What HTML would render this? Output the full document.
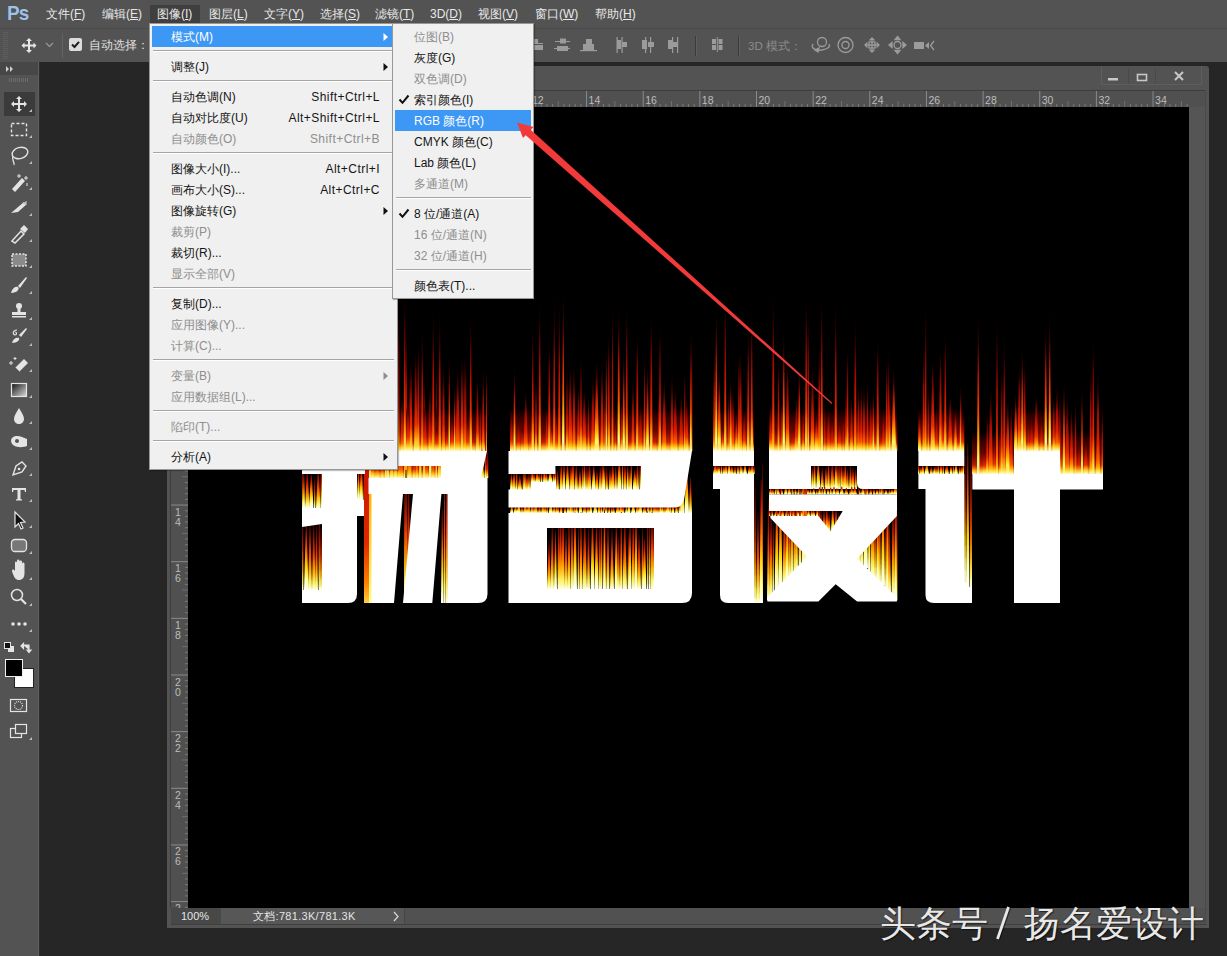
<!DOCTYPE html>
<html><head><meta charset="utf-8">
<style>
*{margin:0;padding:0;box-sizing:border-box}
html,body{width:1227px;height:956px;overflow:hidden;background:#262626;font-family:"Liberation Sans",sans-serif;position:relative}
div,span,svg{position:absolute}
.mb{top:5px;height:18px;line-height:18px;font-size:12px;color:#e8e8e8;white-space:nowrap}
.menu{background:#f0f0f0;border:1px solid #979797;}
.it{height:21px;line-height:23px;font-size:12px;color:#151515;white-space:nowrap}
.dis{color:#8e8e8e}
.sep{height:2px;border-top:1px solid #a5a5a5;border-bottom:1px solid #fff}
.sc{text-align:right;height:21px;line-height:23px;font-size:12px;white-space:nowrap;letter-spacing:.45px}
.hl{background:#3d97f5}
.rn{font-size:10px;color:#bdbdbd;line-height:10px}
</style></head><body>

<div style="left:0;top:0;width:1227px;height:28px;background:#535353"></div>
<div style="left:7px;top:1px;height:24px;line-height:24px;font-size:20.5px;font-weight:bold;color:#a2c0e0;letter-spacing:-0.8px;transform:scaleX(.92);transform-origin:0 0;text-shadow:0 0 1px #2a4f7a">Ps</div>
<div style="left:150px;top:5px;width:50px;height:18px;background:#3f3f3f"></div>
<div class="mb" style="left:46px">文件(<u>F</u>)</div>
<div class="mb" style="left:102px">编辑(<u>E</u>)</div>
<div class="mb" style="left:157px">图像(<u>I</u>)</div>
<div class="mb" style="left:209px">图层(<u>L</u>)</div>
<div class="mb" style="left:264px">文字(<u>Y</u>)</div>
<div class="mb" style="left:320px">选择(<u>S</u>)</div>
<div class="mb" style="left:375px">滤镜(<u>T</u>)</div>
<div class="mb" style="left:430px">3D(<u>D</u>)</div>
<div class="mb" style="left:478px">视图(<u>V</u>)</div>
<div class="mb" style="left:535px">窗口(<u>W</u>)</div>
<div class="mb" style="left:595px">帮助(<u>H</u>)</div>
<div style="left:0;top:28px;width:1227px;height:34px;background:#535353;border-top:1px solid #4a4a4a"></div>
<div style="left:3px;top:32px;width:5px;height:27px;background:repeating-linear-gradient(#5d5d5d 0 1px,transparent 1px 2px)"></div>
<svg style="left:20px;top:37px" width="18" height="17" viewBox="0 0 18 17"><path d="M9 1 L12 4 H10 V7.5 H13.5 V5.5 L16.5 8.5 L13.5 11.5 V9.5 H10 V13 H12 L9 16 L6 13 H8 V9.5 H4.5 V11.5 L1.5 8.5 L4.5 5.5 V7.5 H8 V4 H6 Z" fill="#e6e6e6"/></svg>
<svg style="left:45px;top:42px" width="9" height="6"><path d="M1 1 L4.5 4.5 L8 1" stroke="#9a9a9a" fill="none" stroke-width="1.2"/></svg>
<div style="left:62px;top:33px;width:1px;height:25px;background:#3e3e3e;border-right:1px solid #646464"></div>
<div style="left:69px;top:38px;width:13px;height:13px;background:#dcdcdc;border-radius:2px"></div>
<svg style="left:69px;top:38px" width="13" height="13"><path d="M3 6.5 L5.5 9 L10 3.8" stroke="#1e1e1e" stroke-width="2" fill="none"/></svg>
<div style="left:89px;top:36px;height:18px;line-height:18px;font-size:12px;color:#e0e0e0;white-space:nowrap">自动选择：</div>
<svg style="left:528px;top:36px" width="410" height="20" viewBox="528 36 410 20">
<g fill="#9b9b9b">
<rect x="531" y="39" width="7" height="4"/><rect x="531" y="45" width="12" height="5"/><rect x="530" y="43" width="13" height="1"/>
<rect x="560" y="38.5" width="6" height="5"/><rect x="555" y="41" width="15" height="1"/><rect x="557" y="46" width="11" height="5"/><rect x="554" y="48" width="16" height="1"/>
<rect x="586" y="39" width="6" height="5"/><rect x="583" y="44" width="11" height="6"/><rect x="580" y="50" width="17" height="1.2"/>
<rect x="616.5" y="37" width="1.2" height="16"/><rect x="617" y="40" width="4" height="9"/><rect x="621.5" y="37" width="1.2" height="16"/><rect x="622" y="42" width="5" height="5"/>
<rect x="642" y="40" width="5" height="9"/><rect x="645" y="37" width="1.2" height="16"/><rect x="648" y="42" width="6" height="5"/><rect x="650" y="37" width="1.2" height="16"/>
<rect x="668" y="40" width="4" height="9"/><rect x="672" y="37" width="1.2" height="16"/><rect x="673" y="42" width="4" height="5"/><rect x="677" y="37" width="1.2" height="16"/>
<rect x="712" y="39" width="4" height="5"/><rect x="712" y="45" width="4" height="5"/><rect x="718.5" y="39" width="4" height="5"/><rect x="718.5" y="45" width="4" height="5"/><rect x="716.8" y="37" width="1" height="15"/>
</g>
<rect x="695" y="36" width="1" height="20" fill="#3c3c3c"/><rect x="696" y="36" width="1" height="20" fill="#5f5f5f"/>
<rect x="738" y="36" width="1" height="20" fill="#3c3c3c"/><rect x="739" y="36" width="1" height="20" fill="#5f5f5f"/>
</svg>
<div style="left:748px;top:37px;height:18px;line-height:18px;font-size:11.5px;color:#8c8c8c;white-space:nowrap">3D 模式：</div>
<svg style="left:805px;top:35px" width="135" height="22" viewBox="805 35 135 22" fill="none" stroke="#9b9b9b" stroke-width="1.3">
<circle cx="822" cy="42" r="4.5"/><path d="M813 44 C810 48 816 51 822 50 C827 49 831 47 829 44"/><path d="M815 50 L819 48 L818 52 Z" fill="#9b9b9b"/>
<circle cx="845.5" cy="45" r="7.5"/><circle cx="845.5" cy="45" r="3.5"/>
<path d="M872 38 V52 M865 45 H879 M869.5 40.5 L872 38 L874.5 40.5 M869.5 49.5 L872 52 L874.5 49.5 M867.5 42.5 L865 45 L867.5 47.5 M876.5 42.5 L879 45 L876.5 47.5"/><rect x="869" y="42" width="6" height="6"/>
<circle cx="897.5" cy="45" r="3.5"/><path d="M897.5 36.5 L900 39.5 H895 Z M897.5 53.5 L900 50.5 H895 Z M889 45 L892 42.5 V47.5 Z M906 45 L903 42.5 V47.5 Z" fill="#9b9b9b"/>
<rect x="914" y="42" width="10" height="7" fill="#9b9b9b" stroke="none"/><path d="M925 45.5 L929 42 V49 Z" fill="#9b9b9b" stroke="none"/><path d="M934 41 L930.5 45.5 L934 50"/>
</svg>
<div style="left:0;top:62px;width:40px;height:894px;background:#535353"></div>
<div style="left:38px;top:62px;width:1px;height:894px;background:#5e5e5e"></div>
<div style="left:39px;top:62px;width:1px;height:894px;background:#2e2e2e"></div>
<div style="left:0;top:62px;width:38px;height:13px;background:#474747"></div>
<svg style="left:5px;top:65px" width="10" height="8"><path d="M1 1 L4 4 L1 7 Z M5 1 L8 4 L5 7 Z" fill="#d0d0d0"/></svg>
<div style="left:9px;top:78px;width:20px;height:4px;background:repeating-linear-gradient(90deg,#6a6a6a 0 1px,transparent 1px 2px)"></div>
<div style="left:4px;top:92px;width:31px;height:24px;background:#3b3b3b"></div>
<svg style="left:0;top:0" width="40" height="760"><defs><linearGradient id="tg2" x1="0" y1="0" x2="1" y2="1"><stop offset="0" stop-color="#111"/><stop offset="1" stop-color="#ddd"/></linearGradient></defs><path d="M19 96 L22 99 H20 V103 H24 V101 L27 104 L24 107 V105 H20 V109 H22 L19 112 L16 109 H18 V105 H14 V107 L11 104 L14 101 V103 H18 V99 H16 Z" fill="#e4e4e4"/><rect x="11.5" y="123.5" width="15" height="12" fill="none" stroke="#e4e4e4" stroke-width="1.4" stroke-dasharray="3 2"/><ellipse cx="20" cy="153" rx="8" ry="5.5" fill="none" stroke="#e4e4e4" stroke-width="1.4" transform="rotate(-15 20 153)"/><path d="M13 156 C11 160 15 162 14 165" fill="none" stroke="#e4e4e4" stroke-width="1.3"/><path d="M12 189 L22 178 L25 181 L15 192 Z" fill="#e4e4e4"/><path d="M19 174 V178 M17 176 H21 M26 176 V180 M24 178 H28 M27 183 V186" stroke="#e4e4e4" stroke-width="1"/><path d="M11 213 L24 202 L27 204 L18 212 Z" fill="#e4e4e4"/><path d="M22 203 L27 201 L26 205 Z" fill="#bdbdbd"/><path d="M12 241 L21 231 L24 234 L15 243 Z" fill="none" stroke="#e4e4e4" stroke-width="1.5"/><path d="M20 229 L24 225 L28 229 L25 233 Z" fill="#e4e4e4"/><rect x="12" y="254" width="14" height="12" fill="#8a8a8a" stroke="#e4e4e4" stroke-width="1.5" stroke-dasharray="2 1.5"/><path d="M18 286 L26 277 L27 278 L20 288 Z" fill="#e4e4e4"/><path d="M11 293 C12 289 15 286 18 287 C20 289 17 293 11 293 Z" fill="#e4e4e4"/><circle cx="19" cy="306" r="3" fill="#e4e4e4"/><rect x="17.5" y="308" width="3" height="4" fill="#e4e4e4"/><rect x="12" y="312" width="14" height="3" fill="#e4e4e4"/><rect x="12" y="316" width="14" height="1.5" fill="#e4e4e4"/><path d="M19 335 L26 328 L27 329 L21 337 Z" fill="#e4e4e4"/><path d="M12 343 C13 339 16 337 19 338 C20 340 17 343 12 343 Z" fill="#e4e4e4"/><path d="M17 330 C13 330 12 334 15 335 C17 335 17 332 15 332" fill="none" stroke="#e4e4e4" stroke-width="1.2"/><path d="M15 368 L24 359 L28 363 L19 372 Z" fill="#e4e4e4"/><path d="M15 368 L19 372" stroke="#535353" stroke-width="1.5"/><path d="M11 361 V365 M9 363 H13 M15 357 V360 M13.5 358.5 H16.5" stroke="#e4e4e4" stroke-width="1"/><rect x="11.5" y="383.5" width="15" height="13" fill="url(#tg2)" stroke="#e4e4e4" stroke-width="1.2"/><path d="M19 408 C16 413 14 416 14 419 C14 422 16.5 424 19 424 C21.5 424 24 422 24 419 C24 416 22 413 19 408 Z" fill="#e4e4e4"/><path d="M11 441 C11 436 17 435 22 437 L27 439 L27 446 C22 448 12 448 11 441 Z" fill="#e4e4e4"/><circle cx="17" cy="441" r="2" fill="#535353"/><path d="M13 475 L16 466 L22 462 L26 466 L22 472 Z" fill="none" stroke="#e4e4e4" stroke-width="1.4"/><circle cx="19" cy="469" r="1.3" fill="#e4e4e4"/><path d="M12 488 H26 V492 H25 L24.5 490 H20.5 V499 L22 499.5 V500.5 H16 V499.5 L17.5 499 V490 H13.5 L13 492 H12 Z" fill="#e4e4e4"/><path d="M15 512 L15 527 L18.5 523.5 L21 529 L23 528 L20.5 522.5 L25 522 Z" fill="#111" stroke="#e4e4e4" stroke-width="1.2"/><rect x="11.5" y="539.5" width="15" height="12" rx="3.5" fill="#777" stroke="#e4e4e4" stroke-width="1.3"/><path d="M12 571 C12 569 14 569 15 571 L15 563 C15 561 17 561 17 563 L17 568 L17 561 C17 559 19.5 559 19.5 561 L19.5 568 L19.5 562 C19.5 560 22 560 22 562 L22 568 L22 564 C22 562 24.5 562 24.5 564 L24.5 573 C24.5 578 22 580 19 580 C16 580 14 578 12 571 Z" fill="#e4e4e4"/><circle cx="17" cy="595" r="5.5" fill="none" stroke="#e4e4e4" stroke-width="1.5"/><path d="M21 599 L26 604" stroke="#e4e4e4" stroke-width="2.2"/><circle cx="13" cy="624" r="1.8" fill="#e4e4e4"/><circle cx="19" cy="624" r="1.8" fill="#e4e4e4"/><circle cx="25" cy="624" r="1.8" fill="#e4e4e4"/><rect x="8" y="646" width="6" height="6" fill="#e4e4e4"/><rect x="4.5" y="642.5" width="6" height="6" fill="#111" stroke="#e4e4e4" stroke-width="1"/><path d="M23 645 H29 V650 M21 646 L23.5 643.5 V648.5 Z M27 650 H31 L29 652.5 Z" stroke="#e4e4e4" stroke-width="1.2" fill="#e4e4e4"/><rect x="14.5" y="668.5" width="19" height="19" fill="#fff" stroke="#222" stroke-width="1"/><rect x="5.5" y="659.5" width="17" height="17" fill="#000" stroke="#f0f0f0" stroke-width="1"/><rect x="10.5" y="699.5" width="16" height="12" fill="none" stroke="#e4e4e4" stroke-width="1.2"/><circle cx="18.5" cy="705.5" r="4" fill="none" stroke="#e4e4e4" stroke-width="1.2" stroke-dasharray="1 1"/><rect x="10.5" y="728.5" width="11" height="9" fill="#535353" stroke="#e4e4e4" stroke-width="1.2"/><rect x="15.5" y="724.5" width="11" height="9" fill="#535353" stroke="#e4e4e4" stroke-width="1.2"/><path d="M32 112 L32 109 L29 112 Z" fill="#bdbdbd"/><path d="M32 138 L32 135 L29 138 Z" fill="#bdbdbd"/><path d="M32 164 L32 161 L29 164 Z" fill="#bdbdbd"/><path d="M32 190 L32 187 L29 190 Z" fill="#bdbdbd"/><path d="M32 216 L32 213 L29 216 Z" fill="#bdbdbd"/><path d="M32 242 L32 239 L29 242 Z" fill="#bdbdbd"/><path d="M32 268 L32 265 L29 268 Z" fill="#bdbdbd"/><path d="M32 294 L32 291 L29 294 Z" fill="#bdbdbd"/><path d="M32 320 L32 317 L29 320 Z" fill="#bdbdbd"/><path d="M32 346 L32 343 L29 346 Z" fill="#bdbdbd"/><path d="M32 372 L32 369 L29 372 Z" fill="#bdbdbd"/><path d="M32 398 L32 395 L29 398 Z" fill="#bdbdbd"/><path d="M32 424 L32 421 L29 424 Z" fill="#bdbdbd"/><path d="M32 450 L32 447 L29 450 Z" fill="#bdbdbd"/><path d="M32 476 L32 473 L29 476 Z" fill="#bdbdbd"/><path d="M32 502 L32 499 L29 502 Z" fill="#bdbdbd"/><path d="M32 528 L32 525 L29 528 Z" fill="#bdbdbd"/><path d="M32 554 L32 551 L29 554 Z" fill="#bdbdbd"/><path d="M32 580 L32 577 L29 580 Z" fill="#bdbdbd"/><path d="M32 606 L32 603 L29 606 Z" fill="#bdbdbd"/><path d="M32 632 L32 629 L29 632 Z" fill="#bdbdbd"/><path d="M32 740 L32 737 L29 740 Z" fill="#bdbdbd"/></svg>
<div style="left:167px;top:66px;width:1042px;height:862px;background:#535353;border-radius:3px 3px 0 0"></div>
<svg style="left:1095px;top:66px" width="114" height="24" viewBox="1095 66 114 24">
<path d="M1101.5 66 V84.5 H1201.5 V66" fill="none" stroke="#5e5e5e" stroke-width="1"/>
<path d="M1128.5 68 V84 M1155.5 68 V84" stroke="#4a4a4a" stroke-width="1"/>
<rect x="1108" y="78" width="10" height="2.5" fill="#c8c8c8"/>
<rect x="1137.5" y="74.5" width="9" height="6" fill="none" stroke="#c8c8c8" stroke-width="1.6"/>
<path d="M1175 72 L1183 80 M1183 72 L1175 80" stroke="#c8c8c8" stroke-width="2"/>
</svg>
<div style="left:171px;top:90px;width:1035px;height:1px;background:#3e3e3e"></div>
<div style="left:171px;top:91px;width:1035px;height:16px;background:#505050"></div>
<div style="left:171px;top:107px;width:17px;height:801px;background:#505050"></div>
<div style="left:170px;top:90px;width:1px;height:818px;background:#3e3e3e"></div>
<div style="left:188px;top:107px;width:1001px;height:801px;background:#000"></div>
<div style="left:1189px;top:107px;width:17px;height:801px;background:#555"></div>
<div style="left:1205px;top:90px;width:1px;height:835px;background:#4a4a4a"></div>
<svg style="left:0;top:0" width="1227" height="956" viewBox="0 0 1227 956"><rect x="189.50" y="91" width="1" height="16" fill="#8a8a8a"/><rect x="195.16" y="104" width="1" height="3" fill="#7a7a7a"/><rect x="200.83" y="104" width="1" height="3" fill="#7a7a7a"/><rect x="206.50" y="104" width="1" height="3" fill="#7a7a7a"/><rect x="212.16" y="104" width="1" height="3" fill="#7a7a7a"/><rect x="217.82" y="101" width="1" height="6" fill="#707070"/><rect x="223.49" y="104" width="1" height="3" fill="#7a7a7a"/><rect x="229.16" y="104" width="1" height="3" fill="#7a7a7a"/><rect x="234.82" y="104" width="1" height="3" fill="#7a7a7a"/><rect x="240.49" y="104" width="1" height="3" fill="#7a7a7a"/><rect x="246.15" y="91" width="1" height="16" fill="#8a8a8a"/><text x="248.65" y="103.5" font-size="10.5" fill="#bcbcbc" font-family="Liberation Sans">2</text><rect x="251.81" y="104" width="1" height="3" fill="#7a7a7a"/><rect x="257.48" y="104" width="1" height="3" fill="#7a7a7a"/><rect x="263.14" y="104" width="1" height="3" fill="#7a7a7a"/><rect x="268.81" y="104" width="1" height="3" fill="#7a7a7a"/><rect x="274.48" y="101" width="1" height="6" fill="#707070"/><rect x="280.14" y="104" width="1" height="3" fill="#7a7a7a"/><rect x="285.81" y="104" width="1" height="3" fill="#7a7a7a"/><rect x="291.47" y="104" width="1" height="3" fill="#7a7a7a"/><rect x="297.13" y="104" width="1" height="3" fill="#7a7a7a"/><rect x="302.80" y="91" width="1" height="16" fill="#8a8a8a"/><text x="305.30" y="103.5" font-size="10.5" fill="#bcbcbc" font-family="Liberation Sans">4</text><rect x="308.47" y="104" width="1" height="3" fill="#7a7a7a"/><rect x="314.13" y="104" width="1" height="3" fill="#7a7a7a"/><rect x="319.79" y="104" width="1" height="3" fill="#7a7a7a"/><rect x="325.46" y="104" width="1" height="3" fill="#7a7a7a"/><rect x="331.12" y="101" width="1" height="6" fill="#707070"/><rect x="336.79" y="104" width="1" height="3" fill="#7a7a7a"/><rect x="342.46" y="104" width="1" height="3" fill="#7a7a7a"/><rect x="348.12" y="104" width="1" height="3" fill="#7a7a7a"/><rect x="353.78" y="104" width="1" height="3" fill="#7a7a7a"/><rect x="359.45" y="91" width="1" height="16" fill="#8a8a8a"/><text x="361.95" y="103.5" font-size="10.5" fill="#bcbcbc" font-family="Liberation Sans">6</text><rect x="365.12" y="104" width="1" height="3" fill="#7a7a7a"/><rect x="370.78" y="104" width="1" height="3" fill="#7a7a7a"/><rect x="376.44" y="104" width="1" height="3" fill="#7a7a7a"/><rect x="382.11" y="104" width="1" height="3" fill="#7a7a7a"/><rect x="387.77" y="101" width="1" height="6" fill="#707070"/><rect x="393.44" y="104" width="1" height="3" fill="#7a7a7a"/><rect x="399.11" y="104" width="1" height="3" fill="#7a7a7a"/><rect x="404.77" y="104" width="1" height="3" fill="#7a7a7a"/><rect x="410.44" y="104" width="1" height="3" fill="#7a7a7a"/><rect x="416.10" y="91" width="1" height="16" fill="#8a8a8a"/><text x="418.60" y="103.5" font-size="10.5" fill="#bcbcbc" font-family="Liberation Sans">8</text><rect x="421.76" y="104" width="1" height="3" fill="#7a7a7a"/><rect x="427.43" y="104" width="1" height="3" fill="#7a7a7a"/><rect x="433.10" y="104" width="1" height="3" fill="#7a7a7a"/><rect x="438.76" y="104" width="1" height="3" fill="#7a7a7a"/><rect x="444.43" y="101" width="1" height="6" fill="#707070"/><rect x="450.09" y="104" width="1" height="3" fill="#7a7a7a"/><rect x="455.75" y="104" width="1" height="3" fill="#7a7a7a"/><rect x="461.42" y="104" width="1" height="3" fill="#7a7a7a"/><rect x="467.08" y="104" width="1" height="3" fill="#7a7a7a"/><rect x="472.75" y="91" width="1" height="16" fill="#8a8a8a"/><text x="475.25" y="103.5" font-size="10.5" fill="#bcbcbc" font-family="Liberation Sans">10</text><rect x="478.42" y="104" width="1" height="3" fill="#7a7a7a"/><rect x="484.08" y="104" width="1" height="3" fill="#7a7a7a"/><rect x="489.75" y="104" width="1" height="3" fill="#7a7a7a"/><rect x="495.41" y="104" width="1" height="3" fill="#7a7a7a"/><rect x="501.07" y="101" width="1" height="6" fill="#707070"/><rect x="506.74" y="104" width="1" height="3" fill="#7a7a7a"/><rect x="512.40" y="104" width="1" height="3" fill="#7a7a7a"/><rect x="518.07" y="104" width="1" height="3" fill="#7a7a7a"/><rect x="523.74" y="104" width="1" height="3" fill="#7a7a7a"/><rect x="529.40" y="91" width="1" height="16" fill="#8a8a8a"/><text x="531.90" y="103.5" font-size="10.5" fill="#bcbcbc" font-family="Liberation Sans">12</text><rect x="535.07" y="104" width="1" height="3" fill="#7a7a7a"/><rect x="540.73" y="104" width="1" height="3" fill="#7a7a7a"/><rect x="546.39" y="104" width="1" height="3" fill="#7a7a7a"/><rect x="552.06" y="104" width="1" height="3" fill="#7a7a7a"/><rect x="557.73" y="101" width="1" height="6" fill="#707070"/><rect x="563.39" y="104" width="1" height="3" fill="#7a7a7a"/><rect x="569.06" y="104" width="1" height="3" fill="#7a7a7a"/><rect x="574.72" y="104" width="1" height="3" fill="#7a7a7a"/><rect x="580.38" y="104" width="1" height="3" fill="#7a7a7a"/><rect x="586.05" y="91" width="1" height="16" fill="#8a8a8a"/><text x="588.55" y="103.5" font-size="10.5" fill="#bcbcbc" font-family="Liberation Sans">14</text><rect x="591.71" y="104" width="1" height="3" fill="#7a7a7a"/><rect x="597.38" y="104" width="1" height="3" fill="#7a7a7a"/><rect x="603.05" y="104" width="1" height="3" fill="#7a7a7a"/><rect x="608.71" y="104" width="1" height="3" fill="#7a7a7a"/><rect x="614.38" y="101" width="1" height="6" fill="#707070"/><rect x="620.04" y="104" width="1" height="3" fill="#7a7a7a"/><rect x="625.70" y="104" width="1" height="3" fill="#7a7a7a"/><rect x="631.37" y="104" width="1" height="3" fill="#7a7a7a"/><rect x="637.04" y="104" width="1" height="3" fill="#7a7a7a"/><rect x="642.70" y="91" width="1" height="16" fill="#8a8a8a"/><text x="645.20" y="103.5" font-size="10.5" fill="#bcbcbc" font-family="Liberation Sans">16</text><rect x="648.37" y="104" width="1" height="3" fill="#7a7a7a"/><rect x="654.03" y="104" width="1" height="3" fill="#7a7a7a"/><rect x="659.69" y="104" width="1" height="3" fill="#7a7a7a"/><rect x="665.36" y="104" width="1" height="3" fill="#7a7a7a"/><rect x="671.02" y="101" width="1" height="6" fill="#707070"/><rect x="676.69" y="104" width="1" height="3" fill="#7a7a7a"/><rect x="682.36" y="104" width="1" height="3" fill="#7a7a7a"/><rect x="688.02" y="104" width="1" height="3" fill="#7a7a7a"/><rect x="693.68" y="104" width="1" height="3" fill="#7a7a7a"/><rect x="699.35" y="91" width="1" height="16" fill="#8a8a8a"/><text x="701.85" y="103.5" font-size="10.5" fill="#bcbcbc" font-family="Liberation Sans">18</text><rect x="705.01" y="104" width="1" height="3" fill="#7a7a7a"/><rect x="710.68" y="104" width="1" height="3" fill="#7a7a7a"/><rect x="716.35" y="104" width="1" height="3" fill="#7a7a7a"/><rect x="722.01" y="104" width="1" height="3" fill="#7a7a7a"/><rect x="727.67" y="101" width="1" height="6" fill="#707070"/><rect x="733.34" y="104" width="1" height="3" fill="#7a7a7a"/><rect x="739.00" y="104" width="1" height="3" fill="#7a7a7a"/><rect x="744.67" y="104" width="1" height="3" fill="#7a7a7a"/><rect x="750.34" y="104" width="1" height="3" fill="#7a7a7a"/><rect x="756.00" y="91" width="1" height="16" fill="#8a8a8a"/><text x="758.50" y="103.5" font-size="10.5" fill="#bcbcbc" font-family="Liberation Sans">20</text><rect x="761.66" y="104" width="1" height="3" fill="#7a7a7a"/><rect x="767.33" y="104" width="1" height="3" fill="#7a7a7a"/><rect x="773.00" y="104" width="1" height="3" fill="#7a7a7a"/><rect x="778.66" y="104" width="1" height="3" fill="#7a7a7a"/><rect x="784.33" y="101" width="1" height="6" fill="#707070"/><rect x="789.99" y="104" width="1" height="3" fill="#7a7a7a"/><rect x="795.65" y="104" width="1" height="3" fill="#7a7a7a"/><rect x="801.32" y="104" width="1" height="3" fill="#7a7a7a"/><rect x="806.99" y="104" width="1" height="3" fill="#7a7a7a"/><rect x="812.65" y="91" width="1" height="16" fill="#8a8a8a"/><text x="815.15" y="103.5" font-size="10.5" fill="#bcbcbc" font-family="Liberation Sans">22</text><rect x="818.32" y="104" width="1" height="3" fill="#7a7a7a"/><rect x="823.98" y="104" width="1" height="3" fill="#7a7a7a"/><rect x="829.64" y="104" width="1" height="3" fill="#7a7a7a"/><rect x="835.31" y="104" width="1" height="3" fill="#7a7a7a"/><rect x="840.98" y="101" width="1" height="6" fill="#707070"/><rect x="846.64" y="104" width="1" height="3" fill="#7a7a7a"/><rect x="852.30" y="104" width="1" height="3" fill="#7a7a7a"/><rect x="857.97" y="104" width="1" height="3" fill="#7a7a7a"/><rect x="863.63" y="104" width="1" height="3" fill="#7a7a7a"/><rect x="869.30" y="91" width="1" height="16" fill="#8a8a8a"/><text x="871.80" y="103.5" font-size="10.5" fill="#bcbcbc" font-family="Liberation Sans">24</text><rect x="874.97" y="104" width="1" height="3" fill="#7a7a7a"/><rect x="880.63" y="104" width="1" height="3" fill="#7a7a7a"/><rect x="886.29" y="104" width="1" height="3" fill="#7a7a7a"/><rect x="891.96" y="104" width="1" height="3" fill="#7a7a7a"/><rect x="897.62" y="101" width="1" height="6" fill="#707070"/><rect x="903.29" y="104" width="1" height="3" fill="#7a7a7a"/><rect x="908.96" y="104" width="1" height="3" fill="#7a7a7a"/><rect x="914.62" y="104" width="1" height="3" fill="#7a7a7a"/><rect x="920.28" y="104" width="1" height="3" fill="#7a7a7a"/><rect x="925.95" y="91" width="1" height="16" fill="#8a8a8a"/><text x="928.45" y="103.5" font-size="10.5" fill="#bcbcbc" font-family="Liberation Sans">26</text><rect x="931.62" y="104" width="1" height="3" fill="#7a7a7a"/><rect x="937.28" y="104" width="1" height="3" fill="#7a7a7a"/><rect x="942.95" y="104" width="1" height="3" fill="#7a7a7a"/><rect x="948.61" y="104" width="1" height="3" fill="#7a7a7a"/><rect x="954.27" y="101" width="1" height="6" fill="#707070"/><rect x="959.94" y="104" width="1" height="3" fill="#7a7a7a"/><rect x="965.61" y="104" width="1" height="3" fill="#7a7a7a"/><rect x="971.27" y="104" width="1" height="3" fill="#7a7a7a"/><rect x="976.94" y="104" width="1" height="3" fill="#7a7a7a"/><rect x="982.60" y="91" width="1" height="16" fill="#8a8a8a"/><text x="985.10" y="103.5" font-size="10.5" fill="#bcbcbc" font-family="Liberation Sans">28</text><rect x="988.26" y="104" width="1" height="3" fill="#7a7a7a"/><rect x="993.93" y="104" width="1" height="3" fill="#7a7a7a"/><rect x="999.60" y="104" width="1" height="3" fill="#7a7a7a"/><rect x="1005.26" y="104" width="1" height="3" fill="#7a7a7a"/><rect x="1010.92" y="101" width="1" height="6" fill="#707070"/><rect x="1016.59" y="104" width="1" height="3" fill="#7a7a7a"/><rect x="1022.25" y="104" width="1" height="3" fill="#7a7a7a"/><rect x="1027.92" y="104" width="1" height="3" fill="#7a7a7a"/><rect x="1033.59" y="104" width="1" height="3" fill="#7a7a7a"/><rect x="1039.25" y="91" width="1" height="16" fill="#8a8a8a"/><text x="1041.75" y="103.5" font-size="10.5" fill="#bcbcbc" font-family="Liberation Sans">30</text><rect x="1044.91" y="104" width="1" height="3" fill="#7a7a7a"/><rect x="1050.58" y="104" width="1" height="3" fill="#7a7a7a"/><rect x="1056.24" y="104" width="1" height="3" fill="#7a7a7a"/><rect x="1061.91" y="104" width="1" height="3" fill="#7a7a7a"/><rect x="1067.58" y="101" width="1" height="6" fill="#707070"/><rect x="1073.24" y="104" width="1" height="3" fill="#7a7a7a"/><rect x="1078.90" y="104" width="1" height="3" fill="#7a7a7a"/><rect x="1084.57" y="104" width="1" height="3" fill="#7a7a7a"/><rect x="1090.24" y="104" width="1" height="3" fill="#7a7a7a"/><rect x="1095.90" y="91" width="1" height="16" fill="#8a8a8a"/><text x="1098.40" y="103.5" font-size="10.5" fill="#bcbcbc" font-family="Liberation Sans">32</text><rect x="1101.57" y="104" width="1" height="3" fill="#7a7a7a"/><rect x="1107.23" y="104" width="1" height="3" fill="#7a7a7a"/><rect x="1112.89" y="104" width="1" height="3" fill="#7a7a7a"/><rect x="1118.56" y="104" width="1" height="3" fill="#7a7a7a"/><rect x="1124.22" y="101" width="1" height="6" fill="#707070"/><rect x="1129.89" y="104" width="1" height="3" fill="#7a7a7a"/><rect x="1135.55" y="104" width="1" height="3" fill="#7a7a7a"/><rect x="1141.22" y="104" width="1" height="3" fill="#7a7a7a"/><rect x="1146.88" y="104" width="1" height="3" fill="#7a7a7a"/><rect x="1152.55" y="91" width="1" height="16" fill="#8a8a8a"/><text x="1155.05" y="103.5" font-size="10.5" fill="#bcbcbc" font-family="Liberation Sans">34</text><rect x="1158.22" y="104" width="1" height="3" fill="#7a7a7a"/><rect x="1163.88" y="104" width="1" height="3" fill="#7a7a7a"/><rect x="1169.55" y="104" width="1" height="3" fill="#7a7a7a"/><rect x="1175.21" y="104" width="1" height="3" fill="#7a7a7a"/><rect x="1180.88" y="101" width="1" height="6" fill="#707070"/><rect x="1186.54" y="104" width="1" height="3" fill="#7a7a7a"/><rect x="171" y="108.00" width="17" height="1" fill="#8a8a8a"/><rect x="185" y="113.67" width="3" height="1" fill="#7a7a7a"/><rect x="185" y="119.33" width="3" height="1" fill="#7a7a7a"/><rect x="185" y="125.00" width="3" height="1" fill="#7a7a7a"/><rect x="185" y="130.66" width="3" height="1" fill="#7a7a7a"/><rect x="182" y="136.32" width="6" height="1" fill="#707070"/><rect x="185" y="141.99" width="3" height="1" fill="#7a7a7a"/><rect x="185" y="147.66" width="3" height="1" fill="#7a7a7a"/><rect x="185" y="153.32" width="3" height="1" fill="#7a7a7a"/><rect x="185" y="158.99" width="3" height="1" fill="#7a7a7a"/><rect x="171" y="164.65" width="17" height="1" fill="#8a8a8a"/><text x="175" y="175.65" font-size="10.5" fill="#bcbcbc" font-family="Liberation Sans">2</text><rect x="185" y="170.31" width="3" height="1" fill="#7a7a7a"/><rect x="185" y="175.98" width="3" height="1" fill="#7a7a7a"/><rect x="185" y="181.64" width="3" height="1" fill="#7a7a7a"/><rect x="185" y="187.31" width="3" height="1" fill="#7a7a7a"/><rect x="182" y="192.97" width="6" height="1" fill="#707070"/><rect x="185" y="198.64" width="3" height="1" fill="#7a7a7a"/><rect x="185" y="204.31" width="3" height="1" fill="#7a7a7a"/><rect x="185" y="209.97" width="3" height="1" fill="#7a7a7a"/><rect x="185" y="215.63" width="3" height="1" fill="#7a7a7a"/><rect x="171" y="221.30" width="17" height="1" fill="#8a8a8a"/><text x="175" y="232.30" font-size="10.5" fill="#bcbcbc" font-family="Liberation Sans">4</text><rect x="185" y="226.97" width="3" height="1" fill="#7a7a7a"/><rect x="185" y="232.63" width="3" height="1" fill="#7a7a7a"/><rect x="185" y="238.29" width="3" height="1" fill="#7a7a7a"/><rect x="185" y="243.96" width="3" height="1" fill="#7a7a7a"/><rect x="182" y="249.62" width="6" height="1" fill="#707070"/><rect x="185" y="255.29" width="3" height="1" fill="#7a7a7a"/><rect x="185" y="260.96" width="3" height="1" fill="#7a7a7a"/><rect x="185" y="266.62" width="3" height="1" fill="#7a7a7a"/><rect x="185" y="272.28" width="3" height="1" fill="#7a7a7a"/><rect x="171" y="277.95" width="17" height="1" fill="#8a8a8a"/><text x="175" y="288.95" font-size="10.5" fill="#bcbcbc" font-family="Liberation Sans">6</text><rect x="185" y="283.62" width="3" height="1" fill="#7a7a7a"/><rect x="185" y="289.28" width="3" height="1" fill="#7a7a7a"/><rect x="185" y="294.94" width="3" height="1" fill="#7a7a7a"/><rect x="185" y="300.61" width="3" height="1" fill="#7a7a7a"/><rect x="182" y="306.27" width="6" height="1" fill="#707070"/><rect x="185" y="311.94" width="3" height="1" fill="#7a7a7a"/><rect x="185" y="317.61" width="3" height="1" fill="#7a7a7a"/><rect x="185" y="323.27" width="3" height="1" fill="#7a7a7a"/><rect x="185" y="328.94" width="3" height="1" fill="#7a7a7a"/><rect x="171" y="334.60" width="17" height="1" fill="#8a8a8a"/><text x="175" y="345.60" font-size="10.5" fill="#bcbcbc" font-family="Liberation Sans">8</text><rect x="185" y="340.26" width="3" height="1" fill="#7a7a7a"/><rect x="185" y="345.93" width="3" height="1" fill="#7a7a7a"/><rect x="185" y="351.60" width="3" height="1" fill="#7a7a7a"/><rect x="185" y="357.26" width="3" height="1" fill="#7a7a7a"/><rect x="182" y="362.93" width="6" height="1" fill="#707070"/><rect x="185" y="368.59" width="3" height="1" fill="#7a7a7a"/><rect x="185" y="374.25" width="3" height="1" fill="#7a7a7a"/><rect x="185" y="379.92" width="3" height="1" fill="#7a7a7a"/><rect x="185" y="385.58" width="3" height="1" fill="#7a7a7a"/><rect x="171" y="391.25" width="17" height="1" fill="#8a8a8a"/><text x="175" y="402.25" font-size="10.5" fill="#bcbcbc" font-family="Liberation Sans">1</text><text x="175" y="412.25" font-size="10.5" fill="#bcbcbc" font-family="Liberation Sans">0</text><rect x="185" y="396.92" width="3" height="1" fill="#7a7a7a"/><rect x="185" y="402.58" width="3" height="1" fill="#7a7a7a"/><rect x="185" y="408.25" width="3" height="1" fill="#7a7a7a"/><rect x="185" y="413.91" width="3" height="1" fill="#7a7a7a"/><rect x="182" y="419.57" width="6" height="1" fill="#707070"/><rect x="185" y="425.24" width="3" height="1" fill="#7a7a7a"/><rect x="185" y="430.91" width="3" height="1" fill="#7a7a7a"/><rect x="185" y="436.57" width="3" height="1" fill="#7a7a7a"/><rect x="185" y="442.24" width="3" height="1" fill="#7a7a7a"/><rect x="171" y="447.90" width="17" height="1" fill="#8a8a8a"/><text x="175" y="458.90" font-size="10.5" fill="#bcbcbc" font-family="Liberation Sans">1</text><text x="175" y="468.90" font-size="10.5" fill="#bcbcbc" font-family="Liberation Sans">2</text><rect x="185" y="453.56" width="3" height="1" fill="#7a7a7a"/><rect x="185" y="459.23" width="3" height="1" fill="#7a7a7a"/><rect x="185" y="464.89" width="3" height="1" fill="#7a7a7a"/><rect x="185" y="470.56" width="3" height="1" fill="#7a7a7a"/><rect x="182" y="476.23" width="6" height="1" fill="#707070"/><rect x="185" y="481.89" width="3" height="1" fill="#7a7a7a"/><rect x="185" y="487.56" width="3" height="1" fill="#7a7a7a"/><rect x="185" y="493.22" width="3" height="1" fill="#7a7a7a"/><rect x="185" y="498.88" width="3" height="1" fill="#7a7a7a"/><rect x="171" y="504.55" width="17" height="1" fill="#8a8a8a"/><text x="175" y="515.55" font-size="10.5" fill="#bcbcbc" font-family="Liberation Sans">1</text><text x="175" y="525.55" font-size="10.5" fill="#bcbcbc" font-family="Liberation Sans">4</text><rect x="185" y="510.21" width="3" height="1" fill="#7a7a7a"/><rect x="185" y="515.88" width="3" height="1" fill="#7a7a7a"/><rect x="185" y="521.55" width="3" height="1" fill="#7a7a7a"/><rect x="185" y="527.21" width="3" height="1" fill="#7a7a7a"/><rect x="182" y="532.88" width="6" height="1" fill="#707070"/><rect x="185" y="538.54" width="3" height="1" fill="#7a7a7a"/><rect x="185" y="544.20" width="3" height="1" fill="#7a7a7a"/><rect x="185" y="549.87" width="3" height="1" fill="#7a7a7a"/><rect x="185" y="555.54" width="3" height="1" fill="#7a7a7a"/><rect x="171" y="561.20" width="17" height="1" fill="#8a8a8a"/><text x="175" y="572.20" font-size="10.5" fill="#bcbcbc" font-family="Liberation Sans">1</text><text x="175" y="582.20" font-size="10.5" fill="#bcbcbc" font-family="Liberation Sans">6</text><rect x="185" y="566.87" width="3" height="1" fill="#7a7a7a"/><rect x="185" y="572.53" width="3" height="1" fill="#7a7a7a"/><rect x="185" y="578.19" width="3" height="1" fill="#7a7a7a"/><rect x="185" y="583.86" width="3" height="1" fill="#7a7a7a"/><rect x="182" y="589.52" width="6" height="1" fill="#707070"/><rect x="185" y="595.19" width="3" height="1" fill="#7a7a7a"/><rect x="185" y="600.86" width="3" height="1" fill="#7a7a7a"/><rect x="185" y="606.52" width="3" height="1" fill="#7a7a7a"/><rect x="185" y="612.18" width="3" height="1" fill="#7a7a7a"/><rect x="171" y="617.85" width="17" height="1" fill="#8a8a8a"/><text x="175" y="628.85" font-size="10.5" fill="#bcbcbc" font-family="Liberation Sans">1</text><text x="175" y="638.85" font-size="10.5" fill="#bcbcbc" font-family="Liberation Sans">8</text><rect x="185" y="623.51" width="3" height="1" fill="#7a7a7a"/><rect x="185" y="629.18" width="3" height="1" fill="#7a7a7a"/><rect x="185" y="634.85" width="3" height="1" fill="#7a7a7a"/><rect x="185" y="640.51" width="3" height="1" fill="#7a7a7a"/><rect x="182" y="646.17" width="6" height="1" fill="#707070"/><rect x="185" y="651.84" width="3" height="1" fill="#7a7a7a"/><rect x="185" y="657.50" width="3" height="1" fill="#7a7a7a"/><rect x="185" y="663.17" width="3" height="1" fill="#7a7a7a"/><rect x="185" y="668.84" width="3" height="1" fill="#7a7a7a"/><rect x="171" y="674.50" width="17" height="1" fill="#8a8a8a"/><text x="175" y="685.50" font-size="10.5" fill="#bcbcbc" font-family="Liberation Sans">2</text><text x="175" y="695.50" font-size="10.5" fill="#bcbcbc" font-family="Liberation Sans">0</text><rect x="185" y="680.16" width="3" height="1" fill="#7a7a7a"/><rect x="185" y="685.83" width="3" height="1" fill="#7a7a7a"/><rect x="185" y="691.50" width="3" height="1" fill="#7a7a7a"/><rect x="185" y="697.16" width="3" height="1" fill="#7a7a7a"/><rect x="182" y="702.83" width="6" height="1" fill="#707070"/><rect x="185" y="708.49" width="3" height="1" fill="#7a7a7a"/><rect x="185" y="714.15" width="3" height="1" fill="#7a7a7a"/><rect x="185" y="719.82" width="3" height="1" fill="#7a7a7a"/><rect x="185" y="725.49" width="3" height="1" fill="#7a7a7a"/><rect x="171" y="731.15" width="17" height="1" fill="#8a8a8a"/><text x="175" y="742.15" font-size="10.5" fill="#bcbcbc" font-family="Liberation Sans">2</text><text x="175" y="752.15" font-size="10.5" fill="#bcbcbc" font-family="Liberation Sans">2</text><rect x="185" y="736.82" width="3" height="1" fill="#7a7a7a"/><rect x="185" y="742.48" width="3" height="1" fill="#7a7a7a"/><rect x="185" y="748.14" width="3" height="1" fill="#7a7a7a"/><rect x="185" y="753.81" width="3" height="1" fill="#7a7a7a"/><rect x="182" y="759.48" width="6" height="1" fill="#707070"/><rect x="185" y="765.14" width="3" height="1" fill="#7a7a7a"/><rect x="185" y="770.80" width="3" height="1" fill="#7a7a7a"/><rect x="185" y="776.47" width="3" height="1" fill="#7a7a7a"/><rect x="185" y="782.13" width="3" height="1" fill="#7a7a7a"/><rect x="171" y="787.80" width="17" height="1" fill="#8a8a8a"/><text x="175" y="798.80" font-size="10.5" fill="#bcbcbc" font-family="Liberation Sans">2</text><text x="175" y="808.80" font-size="10.5" fill="#bcbcbc" font-family="Liberation Sans">4</text><rect x="185" y="793.47" width="3" height="1" fill="#7a7a7a"/><rect x="185" y="799.13" width="3" height="1" fill="#7a7a7a"/><rect x="185" y="804.79" width="3" height="1" fill="#7a7a7a"/><rect x="185" y="810.46" width="3" height="1" fill="#7a7a7a"/><rect x="182" y="816.12" width="6" height="1" fill="#707070"/><rect x="185" y="821.79" width="3" height="1" fill="#7a7a7a"/><rect x="185" y="827.46" width="3" height="1" fill="#7a7a7a"/><rect x="185" y="833.12" width="3" height="1" fill="#7a7a7a"/><rect x="185" y="838.78" width="3" height="1" fill="#7a7a7a"/><rect x="171" y="844.45" width="17" height="1" fill="#8a8a8a"/><text x="175" y="855.45" font-size="10.5" fill="#bcbcbc" font-family="Liberation Sans">2</text><text x="175" y="865.45" font-size="10.5" fill="#bcbcbc" font-family="Liberation Sans">6</text><rect x="185" y="850.12" width="3" height="1" fill="#7a7a7a"/><rect x="185" y="855.78" width="3" height="1" fill="#7a7a7a"/><rect x="185" y="861.45" width="3" height="1" fill="#7a7a7a"/><rect x="185" y="867.11" width="3" height="1" fill="#7a7a7a"/><rect x="182" y="872.77" width="6" height="1" fill="#707070"/><rect x="185" y="878.44" width="3" height="1" fill="#7a7a7a"/><rect x="185" y="884.11" width="3" height="1" fill="#7a7a7a"/><rect x="185" y="889.77" width="3" height="1" fill="#7a7a7a"/><rect x="185" y="895.44" width="3" height="1" fill="#7a7a7a"/><rect x="171" y="901.10" width="17" height="1" fill="#8a8a8a"/><text x="175" y="912.10" font-size="10.5" fill="#bcbcbc" font-family="Liberation Sans">2</text><text x="175" y="922.10" font-size="10.5" fill="#bcbcbc" font-family="Liberation Sans">8</text><rect x="185" y="906.76" width="3" height="1" fill="#7a7a7a"/></svg>
<div style="left:171px;top:908px;width:1034px;height:16px;background:#515151"></div>
<div style="left:171px;top:908px;width:50px;height:16px;background:#484848"></div>
<div style="left:221px;top:908px;width:183px;height:16px;background:#575757"></div>
<div style="left:404px;top:909px;width:1px;height:14px;background:#444"></div>
<div style="left:171px;top:924px;width:1035px;height:1px;background:#3f3f3f"></div>
<div style="left:181px;top:908px;height:16px;line-height:16px;font-size:11px;color:#e4e4e4;white-space:nowrap">100%</div>
<div style="left:253px;top:908px;height:16px;line-height:16px;font-size:11px;color:#e4e4e4;white-space:nowrap;letter-spacing:.3px">文档:781.3K/781.3K</div>
<svg style="left:392px;top:910px" width="8" height="13"><path d="M2 2 L6 6.5 L2 11" stroke="#d8d8d8" stroke-width="1.2" fill="none"/></svg>
<svg style="left:0;top:0" width="1227" height="956" viewBox="0 0 1227 956"><defs>
<linearGradient id="f0" x1="0" y1="1" x2="0" y2="0"><stop offset="0" stop-color="#ffffd0"/><stop offset=".06" stop-color="#ffe040"/><stop offset=".15" stop-color="#ff9000"/><stop offset=".27" stop-color="#f03000"/><stop offset=".5" stop-color="#c01000"/><stop offset=".78" stop-color="#680000"/><stop offset="1" stop-color="#300000" stop-opacity=".1"/></linearGradient>
<linearGradient id="f1" x1="0" y1="1" x2="0" y2="0"><stop offset="0" stop-color="#ffffa0"/><stop offset=".05" stop-color="#ffc000"/><stop offset=".13" stop-color="#ff6000"/><stop offset=".3" stop-color="#e02000"/><stop offset=".6" stop-color="#a00800"/><stop offset="1" stop-color="#300000" stop-opacity=".1"/></linearGradient>
<linearGradient id="f2" x1="0" y1="1" x2="0" y2="0"><stop offset="0" stop-color="#ffffff"/><stop offset=".1" stop-color="#ffff60"/><stop offset=".22" stop-color="#ffb000"/><stop offset=".38" stop-color="#ff4800"/><stop offset=".65" stop-color="#b01000"/><stop offset="1" stop-color="#300000" stop-opacity=".1"/></linearGradient>
<linearGradient id="fb" x1="0" y1="1" x2="0" y2="0"><stop offset="0" stop-color="#ffffd0"/><stop offset=".4" stop-color="#ffe040" stop-opacity=".8"/><stop offset="1" stop-color="#ff9000" stop-opacity="0"/></linearGradient>
<linearGradient id="h0" x1="0" y1="1" x2="0" y2="0"><stop offset="0" stop-color="#ffffff"/><stop offset=".16" stop-color="#ffffa0"/><stop offset=".36" stop-color="#ffd000"/><stop offset=".56" stop-color="#ff7000"/><stop offset=".78" stop-color="#d02000"/><stop offset="1" stop-color="#600000"/></linearGradient>
<linearGradient id="h1" x1="0" y1="1" x2="0" y2="0"><stop offset="0" stop-color="#ffffe0"/><stop offset=".12" stop-color="#fff060"/><stop offset=".3" stop-color="#ffa000"/><stop offset=".52" stop-color="#f04000"/><stop offset=".76" stop-color="#a01000"/><stop offset="1" stop-color="#300000"/></linearGradient>
<linearGradient id="fg" x1="0" y1="1" x2="0" y2="0"><stop offset="0" stop-color="#ffa000"/><stop offset=".15" stop-color="#e03000"/><stop offset=".45" stop-color="#800800"/><stop offset=".8" stop-color="#300000"/><stop offset="1" stop-color="#000" stop-opacity="0"/></linearGradient>
</defs><rect x="302" y="407" width="63" height="45" fill="url(#fg)" opacity=".8"/><path d="M302.0 452.0L302.9 330.7H303.6L304.5 452.0Z" fill="url(#f0)"/><path d="M305.5 452.0L306.2 425.1H306.8L307.5 452.0Z" fill="url(#f0)"/><path d="M308.0 452.0L309.7 423.2H310.3L312.0 452.0Z" fill="url(#f2)"/><path d="M312.0 452.0L312.2 394.0H313.2L313.5 452.0Z" fill="url(#f0)"/><path d="M313.5 452.0L314.5 387.7H315.5L316.5 452.0Z" fill="url(#f2)"/><path d="M316.5 452.0L317.0 383.3H318.0L318.5 452.0Z" fill="url(#f2)"/><path d="M318.0 452.0L318.4 391.6H319.1L319.5 452.0Z" fill="url(#f1)"/><path d="M320.5 452.0L322.4 413.7H323.1L325.0 452.0Z" fill="url(#f0)"/><path d="M326.0 452.0L327.0 359.0H328.0L329.0 452.0Z" fill="url(#f1)"/><path d="M328.5 452.0L329.1 418.3H329.9L330.5 452.0Z" fill="url(#f1)"/><path d="M330.0 452.0L330.6 319.3H331.4L332.0 452.0Z" fill="url(#f1)"/><path d="M333.5 452.0L334.9 386.4H335.6L337.0 452.0Z" fill="url(#f0)"/><path d="M337.5 452.0L338.1 374.1H338.9L339.5 452.0Z" fill="url(#f1)"/><path d="M341.0 452.0L341.9 333.8H342.6L343.5 452.0Z" fill="url(#f1)"/><path d="M343.5 452.0L344.1 414.9H344.9L345.5 452.0Z" fill="url(#f0)"/><path d="M346.0 452.0L347.9 395.0H348.6L350.5 452.0Z" fill="url(#f0)"/><path d="M351.5 452.0L352.7 351.2H353.3L354.5 452.0Z" fill="url(#f1)"/><path d="M354.5 452.0L355.0 414.4H356.0L356.5 452.0Z" fill="url(#f1)"/><path d="M356.5 452.0L357.5 418.3H358.5L359.5 452.0Z" fill="url(#f2)"/><path d="M359.5 452.0L360.4 389.0H361.1L362.0 452.0Z" fill="url(#f0)"/><path d="M363.5 452.0L363.9 400.0H364.6L365.0 452.0Z" fill="url(#f1)"/><rect x="302" y="443" width="63" height="9" fill="url(#fb)" opacity=".75"/><rect x="365" y="433" width="76" height="45" fill="url(#fg)" opacity=".8"/><path d="M365.0 478.0L365.6 342.2H366.4L367.0 478.0Z" fill="url(#f0)"/><path d="M368.0 478.0L368.2 407.0H369.2L369.5 478.0Z" fill="url(#f1)"/><path d="M369.0 478.0L369.5 330.0H370.5L371.0 478.0Z" fill="url(#f0)"/><path d="M371.0 478.0L372.4 420.7H373.1L374.5 478.0Z" fill="url(#f1)"/><path d="M375.0 478.0L376.9 441.4H377.6L379.5 478.0Z" fill="url(#f1)"/><path d="M381.0 478.0L381.9 434.1H382.6L383.5 478.0Z" fill="url(#f1)"/><path d="M385.0 478.0L385.2 352.1H386.2L386.5 478.0Z" fill="url(#f0)"/><path d="M386.5 478.0L387.2 348.1H388.2L389.0 478.0Z" fill="url(#f0)"/><path d="M390.0 478.0L391.4 398.9H392.1L393.5 478.0Z" fill="url(#f0)"/><path d="M394.0 478.0L395.1 410.5H395.9L397.0 478.0Z" fill="url(#f0)"/><path d="M397.5 478.0L398.6 406.9H399.4L400.5 478.0Z" fill="url(#f1)"/><path d="M400.0 478.0L401.0 418.0H402.0L403.0 478.0Z" fill="url(#f1)"/><path d="M404.0 478.0L404.2 395.1H405.2L405.5 478.0Z" fill="url(#f0)"/><path d="M405.0 478.0L405.9 320.5H406.6L407.5 478.0Z" fill="url(#f1)"/><path d="M408.0 478.0L409.4 370.4H410.1L411.5 478.0Z" fill="url(#f1)"/><path d="M413.0 478.0L413.5 444.2H414.5L415.0 478.0Z" fill="url(#f0)"/><path d="M415.5 478.0L416.4 405.5H417.1L418.0 478.0Z" fill="url(#f1)"/><path d="M419.0 478.0L419.8 383.3H420.8L421.5 478.0Z" fill="url(#f0)"/><path d="M423.0 478.0L423.9 374.8H424.6L425.5 478.0Z" fill="url(#f0)"/><path d="M425.5 478.0L426.5 434.3H427.5L428.5 478.0Z" fill="url(#f1)"/><path d="M429.0 478.0L429.8 385.4H430.8L431.5 478.0Z" fill="url(#f2)"/><path d="M432.0 478.0L432.9 418.4H433.6L434.5 478.0Z" fill="url(#f1)"/><path d="M435.5 478.0L435.9 362.5H436.6L437.0 478.0Z" fill="url(#f0)"/><path d="M438.0 478.0L438.6 427.7H439.4L440.0 478.0Z" fill="url(#f2)"/><path d="M439.5 478.0L439.9 429.3H440.6L441.0 478.0Z" fill="url(#f2)"/><rect x="365" y="469" width="76" height="9" fill="url(#fb)" opacity=".75"/><rect x="398" y="406" width="89" height="45" fill="url(#fg)" opacity=".8"/><path d="M398.0 451.0L398.4 296.6H399.1L399.5 451.0Z" fill="url(#f1)"/><path d="M400.5 451.0L401.5 394.0H402.5L403.5 451.0Z" fill="url(#f1)"/><path d="M403.5 451.0L404.4 297.9H405.1L406.0 451.0Z" fill="url(#f0)"/><path d="M406.0 451.0L407.6 400.5H408.4L410.0 451.0Z" fill="url(#f0)"/><path d="M409.5 451.0L410.5 362.2H411.5L412.5 451.0Z" fill="url(#f0)"/><path d="M414.0 451.0L415.2 352.7H416.2L417.5 451.0Z" fill="url(#f0)"/><path d="M417.0 451.0L417.9 344.6H418.6L419.5 451.0Z" fill="url(#f0)"/><path d="M421.0 451.0L421.9 329.2H422.6L423.5 451.0Z" fill="url(#f1)"/><path d="M423.5 451.0L424.9 402.7H425.6L427.0 451.0Z" fill="url(#f1)"/><path d="M428.5 451.0L428.9 392.3H429.6L430.0 451.0Z" fill="url(#f0)"/><path d="M430.0 451.0L430.6 404.1H431.4L432.0 451.0Z" fill="url(#f0)"/><path d="M432.0 451.0L432.9 311.7H433.6L434.5 451.0Z" fill="url(#f1)"/><path d="M434.5 451.0L436.4 424.6H437.1L439.0 451.0Z" fill="url(#f0)"/><path d="M438.5 451.0L439.4 314.4H440.1L441.0 451.0Z" fill="url(#f1)"/><path d="M442.0 451.0L443.0 364.3H444.0L445.0 451.0Z" fill="url(#f1)"/><path d="M445.5 451.0L446.7 424.0H447.3L448.5 451.0Z" fill="url(#f0)"/><path d="M448.5 451.0L448.9 355.5H449.6L450.0 451.0Z" fill="url(#f2)"/><path d="M450.0 451.0L451.9 416.3H452.6L454.5 451.0Z" fill="url(#f0)"/><path d="M454.0 451.0L454.4 383.9H455.1L455.5 451.0Z" fill="url(#f2)"/><path d="M455.5 451.0L457.2 368.0H458.2L460.0 451.0Z" fill="url(#f1)"/><path d="M460.5 451.0L461.6 357.8H462.4L463.5 451.0Z" fill="url(#f0)"/><path d="M463.5 451.0L463.9 354.1H464.6L465.0 451.0Z" fill="url(#f1)"/><path d="M465.0 451.0L465.2 358.0H466.2L466.5 451.0Z" fill="url(#f1)"/><path d="M466.5 451.0L467.6 416.4H468.4L469.5 451.0Z" fill="url(#f0)"/><path d="M469.5 451.0L470.4 320.0H471.1L472.0 451.0Z" fill="url(#f0)"/><path d="M472.0 451.0L473.1 429.0H473.9L475.0 451.0Z" fill="url(#f1)"/><path d="M476.0 451.0L477.2 377.3H477.8L479.0 451.0Z" fill="url(#f0)"/><path d="M479.5 451.0L479.8 404.6H480.8L481.0 451.0Z" fill="url(#f0)"/><path d="M482.0 451.0L482.9 368.1H483.6L484.5 451.0Z" fill="url(#f1)"/><path d="M486.0 451.0L486.0 371.4H487.0L487.0 451.0Z" fill="url(#f0)"/><rect x="398" y="442" width="89" height="9" fill="url(#fb)" opacity=".75"/><path d="M480.0 478.0L481.5 446.7H482.5L484.0 478.0Z" fill="url(#f2)"/><path d="M485.0 478.0L485.4 428.0H486.1L486.5 478.0Z" fill="url(#f0)"/><path d="M486.0 478.0L486.2 452.8H487.2L487.5 478.0Z" fill="url(#f1)"/><path d="M487.0 478.0L487.1 445.9H487.9L488.0 478.0Z" fill="url(#f0)"/><path d="M487.5 478.0L487.6 453.3H488.2L488.3 478.0Z" fill="url(#f1)"/><rect x="480" y="469" width="8" height="9" fill="url(#fb)" opacity=".75"/><rect x="510" y="406" width="182" height="45" fill="url(#fg)" opacity=".8"/><path d="M510.0 451.0L511.1 410.3H511.9L513.0 451.0Z" fill="url(#f1)"/><path d="M513.5 451.0L514.0 370.3H515.0L515.5 451.0Z" fill="url(#f2)"/><path d="M517.0 451.0L518.0 418.8H519.0L520.0 451.0Z" fill="url(#f1)"/><path d="M521.0 451.0L521.8 425.1H522.8L523.5 451.0Z" fill="url(#f0)"/><path d="M523.5 451.0L525.5 388.5H526.0L528.0 451.0Z" fill="url(#f1)"/><path d="M529.0 451.0L530.1 421.9H530.9L532.0 451.0Z" fill="url(#f1)"/><path d="M531.5 451.0L532.5 326.5H533.0L534.0 451.0Z" fill="url(#f0)"/><path d="M535.0 451.0L535.5 381.0H536.5L537.0 451.0Z" fill="url(#f0)"/><path d="M538.5 451.0L539.4 305.6H540.1L541.0 451.0Z" fill="url(#f0)"/><path d="M541.5 451.0L543.1 428.3H543.9L545.5 451.0Z" fill="url(#f1)"/><path d="M545.5 451.0L546.5 403.4H547.0L548.0 451.0Z" fill="url(#f1)"/><path d="M548.0 451.0L548.8 344.1H549.8L550.5 451.0Z" fill="url(#f0)"/><path d="M550.0 451.0L551.2 424.1H551.8L553.0 451.0Z" fill="url(#f2)"/><path d="M553.0 451.0L554.0 295.6H554.5L555.5 451.0Z" fill="url(#f1)"/><path d="M555.0 451.0L556.0 413.2H557.0L558.0 451.0Z" fill="url(#f1)"/><path d="M558.0 451.0L559.0 300.2H559.5L560.5 451.0Z" fill="url(#f1)"/><path d="M562.0 451.0L563.0 289.9H563.5L564.5 451.0Z" fill="url(#f2)"/><path d="M566.0 451.0L566.5 371.9H567.5L568.0 451.0Z" fill="url(#f0)"/><path d="M568.0 451.0L569.9 363.7H570.6L572.5 451.0Z" fill="url(#f1)"/><path d="M572.5 451.0L573.6 362.0H574.4L575.5 451.0Z" fill="url(#f1)"/><path d="M577.0 451.0L578.0 386.3H579.0L580.0 451.0Z" fill="url(#f0)"/><path d="M580.0 451.0L580.6 357.5H581.4L582.0 451.0Z" fill="url(#f0)"/><path d="M582.0 451.0L583.9 389.2H584.6L586.5 451.0Z" fill="url(#f0)"/><path d="M587.5 451.0L588.2 396.1H588.8L589.5 451.0Z" fill="url(#f0)"/><path d="M591.0 451.0L592.6 375.2H593.4L595.0 451.0Z" fill="url(#f1)"/><path d="M594.5 451.0L596.2 360.7H597.2L599.0 451.0Z" fill="url(#f2)"/><path d="M600.5 451.0L601.6 360.5H602.4L603.5 451.0Z" fill="url(#f1)"/><path d="M603.5 451.0L603.8 391.9H604.8L605.0 451.0Z" fill="url(#f1)"/><path d="M605.5 451.0L605.9 346.4H606.6L607.0 451.0Z" fill="url(#f2)"/><path d="M607.5 451.0L608.2 337.2H609.2L610.0 451.0Z" fill="url(#f0)"/><path d="M611.5 451.0L612.2 304.4H612.8L613.5 451.0Z" fill="url(#f1)"/><path d="M614.5 451.0L614.8 418.1H615.8L616.0 451.0Z" fill="url(#f0)"/><path d="M617.5 451.0L618.2 310.7H619.2L620.0 451.0Z" fill="url(#f2)"/><path d="M620.5 451.0L621.1 400.4H621.9L622.5 451.0Z" fill="url(#f0)"/><path d="M622.5 451.0L623.4 351.9H624.1L625.0 451.0Z" fill="url(#f2)"/><path d="M625.5 451.0L626.4 309.5H627.1L628.0 451.0Z" fill="url(#f0)"/><path d="M629.0 451.0L630.2 426.7H630.8L632.0 451.0Z" fill="url(#f1)"/><path d="M631.5 451.0L632.7 376.9H633.3L634.5 451.0Z" fill="url(#f1)"/><path d="M636.0 451.0L636.8 337.0H637.8L638.5 451.0Z" fill="url(#f0)"/><path d="M638.5 451.0L640.0 403.3H641.0L642.5 451.0Z" fill="url(#f1)"/><path d="M643.5 451.0L644.2 356.5H644.8L645.5 451.0Z" fill="url(#f0)"/><path d="M646.0 451.0L647.1 366.7H647.9L649.0 451.0Z" fill="url(#f2)"/><path d="M650.0 451.0L650.8 320.0H651.8L652.5 451.0Z" fill="url(#f0)"/><path d="M652.5 451.0L654.2 426.1H654.8L656.5 451.0Z" fill="url(#f1)"/><path d="M658.0 451.0L658.2 390.5H659.2L659.5 451.0Z" fill="url(#f1)"/><path d="M659.0 451.0L659.5 330.3H660.5L661.0 451.0Z" fill="url(#f0)"/><path d="M662.0 451.0L663.9 378.4H664.6L666.5 451.0Z" fill="url(#f1)"/><path d="M667.0 451.0L668.0 425.0H668.5L669.5 451.0Z" fill="url(#f1)"/><path d="M670.5 451.0L671.7 371.7H672.3L673.5 451.0Z" fill="url(#f1)"/><path d="M673.0 451.0L674.9 386.8H675.6L677.5 451.0Z" fill="url(#f1)"/><path d="M679.0 451.0L681.0 392.5H681.5L683.5 451.0Z" fill="url(#f1)"/><path d="M684.0 451.0L684.2 373.8H685.2L685.5 451.0Z" fill="url(#f0)"/><path d="M685.0 451.0L686.4 397.3H687.1L688.5 451.0Z" fill="url(#f0)"/><path d="M690.0 451.0L690.5 332.4H691.5L692.0 451.0Z" fill="url(#f2)"/><path d="M691.5 451.0L691.5 344.9H692.3L692.3 451.0Z" fill="url(#f1)"/><rect x="510" y="442" width="182" height="9" fill="url(#fb)" opacity=".75"/><rect x="713" y="406" width="41" height="45" fill="url(#fg)" opacity=".8"/><path d="M713.0 451.0L714.0 346.5H714.5L715.5 451.0Z" fill="url(#f1)"/><path d="M715.0 451.0L716.0 305.5H716.5L717.5 451.0Z" fill="url(#f2)"/><path d="M717.5 451.0L719.0 367.6H719.5L721.0 451.0Z" fill="url(#f2)"/><path d="M721.5 451.0L722.2 426.5H723.2L724.0 451.0Z" fill="url(#f2)"/><path d="M724.0 451.0L724.9 298.5H725.6L726.5 451.0Z" fill="url(#f0)"/><path d="M727.5 451.0L728.2 390.9H728.8L729.5 451.0Z" fill="url(#f1)"/><path d="M729.5 451.0L730.2 379.0H731.2L732.0 451.0Z" fill="url(#f2)"/><path d="M731.5 451.0L732.7 387.6H733.3L734.5 451.0Z" fill="url(#f1)"/><path d="M735.0 451.0L736.2 412.7H736.8L738.0 451.0Z" fill="url(#f2)"/><path d="M738.0 451.0L738.5 353.5H739.5L740.0 451.0Z" fill="url(#f0)"/><path d="M739.5 451.0L740.5 348.5H741.0L742.0 451.0Z" fill="url(#f1)"/><path d="M742.5 451.0L743.8 410.1H744.8L746.0 451.0Z" fill="url(#f0)"/><path d="M747.0 451.0L747.9 331.2H748.6L749.5 451.0Z" fill="url(#f0)"/><path d="M750.5 451.0L751.5 312.5H752.0L753.0 451.0Z" fill="url(#f0)"/><rect x="713" y="442" width="41" height="9" fill="url(#fb)" opacity=".75"/><rect x="769" y="406" width="128" height="45" fill="url(#fg)" opacity=".8"/><path d="M769.0 451.0L770.4 403.7H771.1L772.5 451.0Z" fill="url(#f0)"/><path d="M772.0 451.0L772.8 298.0H773.8L774.5 451.0Z" fill="url(#f1)"/><path d="M774.5 451.0L775.2 425.4H776.2L777.0 451.0Z" fill="url(#f1)"/><path d="M777.5 451.0L778.0 362.9H779.0L779.5 451.0Z" fill="url(#f0)"/><path d="M780.5 451.0L781.0 400.0H782.0L782.5 451.0Z" fill="url(#f1)"/><path d="M782.5 451.0L783.4 331.4H784.1L785.0 451.0Z" fill="url(#f2)"/><path d="M785.5 451.0L787.1 362.8H787.9L789.5 451.0Z" fill="url(#f0)"/><path d="M791.0 451.0L792.7 426.0H793.3L795.0 451.0Z" fill="url(#f1)"/><path d="M794.5 451.0L796.2 396.8H796.8L798.5 451.0Z" fill="url(#f0)"/><path d="M798.0 451.0L798.9 365.7H799.6L800.5 451.0Z" fill="url(#f2)"/><path d="M802.0 451.0L803.0 406.1H803.5L804.5 451.0Z" fill="url(#f0)"/><path d="M805.0 451.0L805.9 299.7H806.6L807.5 451.0Z" fill="url(#f0)"/><path d="M807.5 451.0L807.8 320.1H808.8L809.0 451.0Z" fill="url(#f0)"/><path d="M810.5 451.0L812.0 369.3H813.0L814.5 451.0Z" fill="url(#f0)"/><path d="M814.5 451.0L816.2 413.3H816.8L818.5 451.0Z" fill="url(#f2)"/><path d="M818.0 451.0L819.0 341.7H819.5L820.5 451.0Z" fill="url(#f1)"/><path d="M820.5 451.0L821.5 298.2H822.0L823.0 451.0Z" fill="url(#f0)"/><path d="M824.0 451.0L824.2 404.2H825.2L825.5 451.0Z" fill="url(#f1)"/><path d="M827.0 451.0L828.0 406.9H829.0L830.0 451.0Z" fill="url(#f1)"/><path d="M830.0 451.0L831.9 418.5H832.6L834.5 451.0Z" fill="url(#f1)"/><path d="M834.5 451.0L835.5 300.5H836.0L837.0 451.0Z" fill="url(#f1)"/><path d="M837.5 451.0L839.1 418.9H839.9L841.5 451.0Z" fill="url(#f0)"/><path d="M842.5 451.0L842.8 415.2H843.8L844.0 451.0Z" fill="url(#f1)"/><path d="M845.0 451.0L845.7 390.6H846.3L847.0 451.0Z" fill="url(#f0)"/><path d="M846.5 451.0L847.0 351.6H848.0L848.5 451.0Z" fill="url(#f0)"/><path d="M850.0 451.0L851.1 398.1H851.9L853.0 451.0Z" fill="url(#f0)"/><path d="M854.0 451.0L854.8 321.9H855.8L856.5 451.0Z" fill="url(#f1)"/><path d="M857.0 451.0L858.2 384.3H858.8L860.0 451.0Z" fill="url(#f1)"/><path d="M860.0 451.0L860.9 382.1H861.6L862.5 451.0Z" fill="url(#f1)"/><path d="M862.5 451.0L863.6 384.9H864.4L865.5 451.0Z" fill="url(#f1)"/><path d="M866.5 451.0L867.1 381.3H867.9L868.5 451.0Z" fill="url(#f1)"/><path d="M869.0 451.0L870.5 397.2H871.0L872.5 451.0Z" fill="url(#f1)"/><path d="M872.5 451.0L872.8 390.7H873.8L874.0 451.0Z" fill="url(#f2)"/><path d="M874.0 451.0L874.4 413.0H875.1L875.5 451.0Z" fill="url(#f1)"/><path d="M876.5 451.0L877.2 343.3H878.2L879.0 451.0Z" fill="url(#f0)"/><path d="M880.5 451.0L880.8 429.0H881.8L882.0 451.0Z" fill="url(#f0)"/><path d="M882.0 451.0L883.0 408.6H884.0L885.0 451.0Z" fill="url(#f1)"/><path d="M885.5 451.0L886.4 360.5H887.1L888.0 451.0Z" fill="url(#f0)"/><path d="M887.5 451.0L888.1 354.4H888.9L889.5 451.0Z" fill="url(#f1)"/><path d="M889.0 451.0L889.4 386.6H890.1L890.5 451.0Z" fill="url(#f2)"/><path d="M891.5 451.0L893.5 367.1H894.0L896.0 451.0Z" fill="url(#f2)"/><path d="M896.5 451.0L896.5 422.2H897.3L897.3 451.0Z" fill="url(#f0)"/><rect x="769" y="442" width="128" height="9" fill="url(#fb)" opacity=".75"/><rect x="918" y="406" width="46" height="45" fill="url(#fg)" opacity=".8"/><path d="M918.0 451.0L919.0 412.6H920.0L921.0 451.0Z" fill="url(#f2)"/><path d="M922.5 451.0L923.5 343.8H924.0L925.0 451.0Z" fill="url(#f1)"/><path d="M925.0 451.0L925.2 308.6H926.2L926.5 451.0Z" fill="url(#f1)"/><path d="M927.5 451.0L927.8 390.5H928.8L929.0 451.0Z" fill="url(#f0)"/><path d="M930.5 451.0L932.5 358.5H933.0L935.0 451.0Z" fill="url(#f0)"/><path d="M935.0 451.0L936.0 407.9H937.0L938.0 451.0Z" fill="url(#f1)"/><path d="M939.0 451.0L940.0 350.4H941.0L942.0 451.0Z" fill="url(#f0)"/><path d="M941.5 451.0L942.2 408.5H943.2L944.0 451.0Z" fill="url(#f0)"/><path d="M944.0 451.0L944.9 334.0H945.6L946.5 451.0Z" fill="url(#f0)"/><path d="M948.0 451.0L949.9 395.3H950.6L952.5 451.0Z" fill="url(#f0)"/><path d="M954.0 451.0L955.0 408.2H956.0L957.0 451.0Z" fill="url(#f2)"/><path d="M956.5 451.0L957.4 428.6H958.1L959.0 451.0Z" fill="url(#f0)"/><path d="M959.0 451.0L959.2 417.0H960.2L960.5 451.0Z" fill="url(#f0)"/><path d="M960.0 451.0L960.2 386.0H961.2L961.5 451.0Z" fill="url(#f2)"/><path d="M961.0 451.0L962.0 416.3H963.0L964.0 451.0Z" fill="url(#f0)"/><path d="M963.5 451.0L963.5 416.4H964.3L964.3 451.0Z" fill="url(#f0)"/><rect x="918" y="442" width="46" height="9" fill="url(#fb)" opacity=".75"/><rect x="972" y="429" width="42" height="45" fill="url(#fg)" opacity=".8"/><path d="M972.0 474.0L973.5 451.1H974.0L975.5 474.0Z" fill="url(#f1)"/><path d="M977.0 474.0L977.8 319.7H978.8L979.5 474.0Z" fill="url(#f2)"/><path d="M980.0 474.0L981.0 449.5H982.0L983.0 474.0Z" fill="url(#f1)"/><path d="M982.5 474.0L983.8 447.2H984.8L986.0 474.0Z" fill="url(#f0)"/><path d="M986.0 474.0L987.0 411.9H987.5L988.5 474.0Z" fill="url(#f0)"/><path d="M988.5 474.0L990.2 389.1H991.2L993.0 474.0Z" fill="url(#f1)"/><path d="M993.0 474.0L994.1 436.1H994.9L996.0 474.0Z" fill="url(#f0)"/><path d="M996.0 474.0L996.5 319.9H997.5L998.0 474.0Z" fill="url(#f1)"/><path d="M999.0 474.0L999.5 423.6H1000.5L1001.0 474.0Z" fill="url(#f1)"/><path d="M1000.5 474.0L1001.4 370.3H1002.1L1003.0 474.0Z" fill="url(#f0)"/><path d="M1003.0 474.0L1003.8 337.9H1004.8L1005.5 474.0Z" fill="url(#f1)"/><path d="M1005.5 474.0L1007.2 400.1H1008.2L1010.0 474.0Z" fill="url(#f2)"/><path d="M1009.5 474.0L1010.8 403.6H1011.8L1013.0 474.0Z" fill="url(#f1)"/><rect x="972" y="465" width="42" height="9" fill="url(#fb)" opacity=".75"/><rect x="1014" y="406" width="46" height="45" fill="url(#fg)" opacity=".8"/><path d="M1014.0 451.0L1015.5 392.0H1016.0L1017.5 451.0Z" fill="url(#f2)"/><path d="M1017.5 451.0L1018.9 366.9H1019.6L1021.0 451.0Z" fill="url(#f0)"/><path d="M1021.0 451.0L1021.8 350.2H1022.8L1023.5 451.0Z" fill="url(#f2)"/><path d="M1023.5 451.0L1024.5 361.5H1025.0L1026.0 451.0Z" fill="url(#f0)"/><path d="M1027.5 451.0L1028.0 419.8H1029.0L1029.5 451.0Z" fill="url(#f1)"/><path d="M1029.5 451.0L1031.2 417.4H1031.8L1033.5 451.0Z" fill="url(#f1)"/><path d="M1034.0 451.0L1035.8 395.0H1036.8L1038.5 451.0Z" fill="url(#f0)"/><path d="M1040.0 451.0L1041.2 417.0H1041.8L1043.0 451.0Z" fill="url(#f1)"/><path d="M1044.5 451.0L1045.2 327.5H1046.2L1047.0 451.0Z" fill="url(#f2)"/><path d="M1048.5 451.0L1049.5 312.3H1050.0L1051.0 451.0Z" fill="url(#f2)"/><path d="M1052.5 451.0L1053.3 396.6H1054.2L1055.0 451.0Z" fill="url(#f0)"/><path d="M1055.0 451.0L1056.6 384.9H1057.4L1059.0 451.0Z" fill="url(#f1)"/><path d="M1059.5 451.0L1059.5 395.5H1060.3L1060.3 451.0Z" fill="url(#f0)"/><rect x="1014" y="442" width="46" height="9" fill="url(#fb)" opacity=".75"/><rect x="1060" y="429" width="43" height="45" fill="url(#fg)" opacity=".8"/><path d="M1060.0 474.0L1060.3 406.6H1061.2L1061.5 474.0Z" fill="url(#f0)"/><path d="M1062.5 474.0L1063.6 381.9H1064.4L1065.5 474.0Z" fill="url(#f2)"/><path d="M1065.0 474.0L1066.8 395.0H1067.8L1069.5 474.0Z" fill="url(#f1)"/><path d="M1069.5 474.0L1071.1 409.3H1071.9L1073.5 474.0Z" fill="url(#f0)"/><path d="M1074.5 474.0L1075.1 401.2H1075.9L1076.5 474.0Z" fill="url(#f1)"/><path d="M1077.0 474.0L1078.5 443.0H1079.5L1081.0 474.0Z" fill="url(#f1)"/><path d="M1081.0 474.0L1081.7 385.4H1082.3L1083.0 474.0Z" fill="url(#f2)"/><path d="M1083.5 474.0L1085.3 439.3H1086.2L1088.0 474.0Z" fill="url(#f0)"/><path d="M1089.5 474.0L1090.3 365.3H1091.2L1092.0 474.0Z" fill="url(#f1)"/><path d="M1092.0 474.0L1092.8 344.0H1093.7L1094.5 474.0Z" fill="url(#f0)"/><path d="M1096.0 474.0L1097.7 370.4H1098.3L1100.0 474.0Z" fill="url(#f1)"/><path d="M1101.5 474.0L1101.8 403.1H1102.7L1103.0 474.0Z" fill="url(#f1)"/><rect x="1060" y="465" width="43" height="9" fill="url(#fb)" opacity=".75"/><path d="M754.0 603.0L754.7 478.7H755.3L756.0 603.0Z" fill="url(#h1)"/><path d="M756.0 603.0L757.6 511.9H758.4L760.0 603.0Z" fill="url(#h1)"/><path d="M759.5 603.0L760.8 480.2H761.8L763.0 603.0Z" fill="url(#h0)"/><path d="M762.0 603.0L762.1 462.7H762.9L763.0 603.0Z" fill="url(#h1)"/><path d="M964.0 587.0L964.7 456.3H965.3L966.0 587.0Z" fill="url(#h0)"/><path d="M966.0 587.0L967.4 443.9H968.1L969.5 587.0Z" fill="url(#h0)"/><path d="M970.0 587.0L970.5 454.4H971.5L972.0 587.0Z" fill="url(#h1)"/><path d="M971.0 587.0L971.2 479.2H971.8L972.0 587.0Z" fill="url(#h1)"/><defs><linearGradient id="col" x1="0" y1="0" x2="0" y2="1"><stop offset="0" stop-color="#c81400"/><stop offset=".55" stop-color="#e02800"/><stop offset=".85" stop-color="#ff8000"/><stop offset="1" stop-color="#ffd040"/></linearGradient><linearGradient id="col2" x1="0" y1="0" x2="0" y2="1"><stop offset="0" stop-color="#ffb000"/><stop offset="1" stop-color="#ffff90"/></linearGradient></defs><rect x="364" y="469" width="5" height="134" fill="url(#col)"/><rect x="369" y="494" width="3" height="109" fill="url(#col2)"/><path d="M302.0 508.0L302.5 465.8H303.5L304.0 508.0Z" fill="url(#h1)"/><path d="M303.0 508.0L303.7 474.4H304.3L305.0 508.0Z" fill="url(#h0)"/><path d="M305.0 508.0L306.9 469.2H307.6L309.5 508.0Z" fill="url(#h1)"/><path d="M309.0 508.0L310.8 474.8H311.8L313.5 508.0Z" fill="url(#h0)"/><path d="M314.0 508.0L314.4 476.3H315.1L315.5 508.0Z" fill="url(#h1)"/><path d="M316.0 508.0L317.9 467.2H318.6L320.5 508.0Z" fill="url(#h1)"/><path d="M320.5 508.0L320.9 461.2H321.6L322.0 508.0Z" fill="url(#h1)"/><path d="M321.5 508.0L321.6 467.7H322.2L322.3 508.0Z" fill="url(#h0)"/><path d="M302.0 590.0L302.4 517.0H303.1L303.5 590.0Z" fill="url(#h1)"/><path d="M304.0 590.0L305.9 523.3H306.6L308.5 590.0Z" fill="url(#h0)"/><path d="M308.0 590.0L309.7 518.8H310.3L312.0 590.0Z" fill="url(#h1)"/><path d="M312.0 590.0L313.2 523.6H314.2L315.5 590.0Z" fill="url(#h1)"/><path d="M315.0 590.0L316.1 524.9H316.9L318.0 590.0Z" fill="url(#h1)"/><path d="M318.5 590.0L318.9 512.3H319.6L320.0 590.0Z" fill="url(#h1)"/><path d="M320.0 590.0L320.5 528.1H321.5L322.0 590.0Z" fill="url(#h1)"/><path d="M357.0 500.0L358.1 468.4H358.9L360.0 500.0Z" fill="url(#h0)"/><path d="M359.5 500.0L360.8 467.6H361.8L363.0 500.0Z" fill="url(#h0)"/><path d="M362.0 500.0L362.4 472.0H363.1L363.5 500.0Z" fill="url(#h1)"/><path d="M404.0 603.0L404.4 493.1H405.1L405.5 603.0Z" fill="url(#h0)"/><path d="M404.5 603.0L405.5 469.8H406.5L407.5 603.0Z" fill="url(#h1)"/><path d="M406.5 603.0L408.0 481.1H409.0L410.5 603.0Z" fill="url(#h1)"/><path d="M411.0 603.0L411.5 503.3H412.5L413.0 603.0Z" fill="url(#h1)"/><path d="M441.0 603.0L441.9 509.4H442.6L443.5 603.0Z" fill="url(#h0)"/><path d="M443.5 603.0L444.2 464.7H444.8L445.5 603.0Z" fill="url(#h1)"/><path d="M445.5 603.0L446.2 471.7H447.2L448.0 603.0Z" fill="url(#h1)"/><path d="M510.0 490.0L511.1 473.9H511.9L513.0 490.0Z" fill="url(#h0)"/><path d="M512.0 490.0L513.7 470.5H514.3L516.0 490.0Z" fill="url(#h1)"/><path d="M516.0 490.0L516.2 468.2H517.2L517.5 490.0Z" fill="url(#h1)"/><path d="M517.5 490.0L519.4 475.0H520.1L522.0 490.0Z" fill="url(#h1)"/><path d="M522.5 490.0L523.2 471.3H524.2L525.0 490.0Z" fill="url(#h1)"/><path d="M524.0 490.0L524.7 469.8H525.3L526.0 490.0Z" fill="url(#h0)"/><path d="M525.0 490.0L526.5 475.6H527.5L529.0 490.0Z" fill="url(#h1)"/><path d="M528.0 490.0L528.7 473.6H529.3L530.0 490.0Z" fill="url(#h0)"/><path d="M530.0 490.0L530.2 473.1H530.8L531.0 490.0Z" fill="url(#h1)"/><path d="M531.0 482.0L531.8 469.4H532.8L533.5 482.0Z" fill="url(#h1)"/><path d="M533.0 482.0L533.5 472.5H534.5L535.0 482.0Z" fill="url(#h1)"/><path d="M535.0 482.0L537.0 470.7H537.5L539.5 482.0Z" fill="url(#h1)"/><path d="M538.5 482.0L538.8 473.7H539.8L540.0 482.0Z" fill="url(#h1)"/><path d="M540.5 482.0L541.0 472.1H542.0L542.5 482.0Z" fill="url(#h1)"/><path d="M543.0 482.0L543.8 469.2H544.8L545.5 482.0Z" fill="url(#h1)"/><path d="M544.5 482.0L545.8 472.2H546.8L548.0 482.0Z" fill="url(#h1)"/><path d="M548.0 482.0L550.0 470.6H550.5L552.5 482.0Z" fill="url(#h0)"/><path d="M552.5 482.0L553.4 470.9H554.1L555.0 482.0Z" fill="url(#h1)"/><path d="M555.0 482.0L555.1 469.3H555.9L556.0 482.0Z" fill="url(#h1)"/><path d="M556.0 490.0L557.0 470.1H558.0L559.0 490.0Z" fill="url(#h1)"/><path d="M559.5 490.0L561.0 460.4H561.5L563.0 490.0Z" fill="url(#h1)"/><path d="M562.5 490.0L563.6 463.8H564.4L565.5 490.0Z" fill="url(#h0)"/><path d="M565.5 490.0L567.1 463.6H567.9L569.5 490.0Z" fill="url(#h0)"/><path d="M569.5 490.0L569.9 466.9H570.6L571.0 490.0Z" fill="url(#h1)"/><path d="M570.5 490.0L570.8 467.3H571.8L572.0 490.0Z" fill="url(#h0)"/><path d="M571.5 490.0L572.5 459.1H573.5L574.5 490.0Z" fill="url(#h1)"/><path d="M574.5 490.0L575.8 464.4H576.8L578.0 490.0Z" fill="url(#h1)"/><path d="M578.0 490.0L579.7 468.4H580.3L582.0 490.0Z" fill="url(#h1)"/><path d="M582.0 490.0L582.2 462.7H583.2L583.5 490.0Z" fill="url(#h1)"/><path d="M583.0 490.0L584.1 463.8H584.9L586.0 490.0Z" fill="url(#h0)"/><path d="M586.0 490.0L586.7 464.4H587.3L588.0 490.0Z" fill="url(#h1)"/><path d="M587.5 490.0L589.0 463.8H590.0L591.5 490.0Z" fill="url(#h1)"/><path d="M591.5 490.0L593.5 464.7H594.0L596.0 490.0Z" fill="url(#h0)"/><path d="M595.5 490.0L596.6 469.7H597.4L598.5 490.0Z" fill="url(#h1)"/><path d="M598.5 490.0L600.0 466.0H600.5L602.0 490.0Z" fill="url(#h1)"/><path d="M601.5 490.0L601.9 459.7H602.6L603.0 490.0Z" fill="url(#h1)"/><path d="M602.0 490.0L603.5 463.2H604.0L605.5 490.0Z" fill="url(#h0)"/><path d="M605.5 490.0L605.8 466.7H606.8L607.0 490.0Z" fill="url(#h1)"/><path d="M606.0 490.0L606.6 470.4H607.4L608.0 490.0Z" fill="url(#h1)"/><path d="M608.5 490.0L609.6 467.7H610.4L611.5 490.0Z" fill="url(#h1)"/><path d="M610.5 490.0L612.5 461.6H613.0L615.0 490.0Z" fill="url(#h1)"/><path d="M615.0 490.0L615.4 466.7H616.1L616.5 490.0Z" fill="url(#h0)"/><path d="M615.5 490.0L615.9 470.2H616.6L617.0 490.0Z" fill="url(#h1)"/><path d="M617.0 490.0L618.8 459.4H619.8L621.5 490.0Z" fill="url(#h0)"/><path d="M621.5 490.0L622.1 462.3H622.9L623.5 490.0Z" fill="url(#h0)"/><path d="M623.5 490.0L624.5 463.1H625.5L626.5 490.0Z" fill="url(#h1)"/><path d="M626.5 490.0L627.4 465.4H628.1L629.0 490.0Z" fill="url(#h0)"/><path d="M628.5 490.0L629.6 468.7H630.4L631.5 490.0Z" fill="url(#h1)"/><path d="M630.5 490.0L630.9 460.8H631.6L632.0 490.0Z" fill="url(#h0)"/><path d="M632.5 490.0L634.4 470.1H635.1L637.0 490.0Z" fill="url(#h0)"/><path d="M636.0 490.0L637.0 462.7H638.0L639.0 490.0Z" fill="url(#h1)"/><path d="M639.5 490.0L639.9 461.7H640.6L641.0 490.0Z" fill="url(#h0)"/><path d="M510.0 513.0L511.4 505.6H512.1L513.5 513.0Z" fill="url(#h0)"/><path d="M513.5 513.0L515.2 505.9H515.8L517.5 513.0Z" fill="url(#h0)"/><path d="M516.5 513.0L518.5 503.7H519.0L521.0 513.0Z" fill="url(#h0)"/><path d="M520.5 513.0L521.6 506.3H522.4L523.5 513.0Z" fill="url(#h1)"/><path d="M523.0 513.0L525.0 502.8H525.5L527.5 513.0Z" fill="url(#h1)"/><path d="M526.5 513.0L528.5 502.7H529.0L531.0 513.0Z" fill="url(#h1)"/><path d="M531.0 513.0L531.6 504.1H532.4L533.0 513.0Z" fill="url(#h0)"/><path d="M532.5 513.0L532.8 505.9H533.8L534.0 513.0Z" fill="url(#h1)"/><path d="M533.5 513.0L535.4 503.1H536.1L538.0 513.0Z" fill="url(#h1)"/><path d="M538.0 513.0L539.0 506.0H540.0L541.0 513.0Z" fill="url(#h1)"/><path d="M541.0 513.0L542.4 503.4H543.1L544.5 513.0Z" fill="url(#h1)"/><path d="M543.5 513.0L545.0 504.8H545.5L547.0 513.0Z" fill="url(#h1)"/><path d="M546.5 513.0L547.0 504.1H547.5L548.0 513.0Z" fill="url(#h1)"/><path d="M548.5 513.0L550.4 503.3H551.1L553.0 513.0Z" fill="url(#h0)"/><path d="M552.5 513.0L554.0 504.9H554.5L556.0 513.0Z" fill="url(#h1)"/><path d="M555.5 513.0L556.2 505.0H556.8L557.5 513.0Z" fill="url(#h1)"/><path d="M556.5 513.0L557.7 506.0H558.3L559.5 513.0Z" fill="url(#h1)"/><path d="M559.5 513.0L561.0 504.6H561.5L563.0 513.0Z" fill="url(#h1)"/><path d="M563.5 513.0L564.7 505.9H565.3L566.5 513.0Z" fill="url(#h1)"/><path d="M566.5 513.0L567.7 505.5H568.3L569.5 513.0Z" fill="url(#h0)"/><path d="M569.0 513.0L570.0 503.8H571.0L572.0 513.0Z" fill="url(#h0)"/><path d="M571.0 513.0L571.6 503.0H572.4L573.0 513.0Z" fill="url(#h1)"/><path d="M573.0 513.0L573.8 505.8H574.8L575.5 513.0Z" fill="url(#h1)"/><path d="M575.0 513.0L576.0 505.8H577.0L578.0 513.0Z" fill="url(#h0)"/><path d="M578.5 513.0L580.0 503.2H581.0L582.5 513.0Z" fill="url(#h0)"/><path d="M582.5 513.0L583.9 505.5H584.6L586.0 513.0Z" fill="url(#h1)"/><path d="M585.0 513.0L585.5 505.0H586.0L586.5 513.0Z" fill="url(#h1)"/><path d="M586.5 513.0L587.7 505.9H588.3L589.5 513.0Z" fill="url(#h1)"/><path d="M589.0 513.0L590.4 504.3H591.1L592.5 513.0Z" fill="url(#h0)"/><path d="M593.0 513.0L595.0 502.7H595.5L597.5 513.0Z" fill="url(#h0)"/><path d="M597.5 513.0L598.5 503.3H599.5L600.5 513.0Z" fill="url(#h1)"/><path d="M600.5 513.0L600.8 505.4H601.8L602.0 513.0Z" fill="url(#h0)"/><path d="M602.0 513.0L603.8 504.5H604.8L606.5 513.0Z" fill="url(#h1)"/><path d="M606.0 513.0L606.5 505.6H607.0L607.5 513.0Z" fill="url(#h0)"/><path d="M608.0 513.0L608.9 505.9H609.6L610.5 513.0Z" fill="url(#h1)"/><path d="M611.0 513.0L611.2 506.5H612.2L612.5 513.0Z" fill="url(#h1)"/><path d="M612.0 513.0L613.0 506.5H614.0L615.0 513.0Z" fill="url(#h1)"/><path d="M615.5 513.0L617.4 504.5H618.1L620.0 513.0Z" fill="url(#h1)"/><path d="M619.0 513.0L620.5 503.1H621.0L622.5 513.0Z" fill="url(#h1)"/><path d="M621.5 513.0L622.5 506.1H623.5L624.5 513.0Z" fill="url(#h1)"/><path d="M625.0 513.0L626.1 506.2H626.9L628.0 513.0Z" fill="url(#h0)"/><path d="M627.5 513.0L628.5 503.2H629.5L630.5 513.0Z" fill="url(#h0)"/><path d="M631.0 513.0L633.0 503.6H633.5L635.5 513.0Z" fill="url(#h0)"/><path d="M635.5 513.0L637.0 504.2H638.0L639.5 513.0Z" fill="url(#h1)"/><path d="M638.5 513.0L640.1 502.7H640.9L642.5 513.0Z" fill="url(#h0)"/><path d="M642.5 513.0L644.0 505.6H645.0L646.5 513.0Z" fill="url(#h1)"/><path d="M646.5 513.0L648.0 503.3H648.5L650.0 513.0Z" fill="url(#h1)"/><path d="M650.0 513.0L651.0 502.8H651.5L652.5 513.0Z" fill="url(#h1)"/><path d="M652.5 513.0L653.0 505.1H653.5L654.0 513.0Z" fill="url(#h1)"/><path d="M653.0 513.0L654.2 504.9H655.2L656.5 513.0Z" fill="url(#h1)"/><path d="M655.5 513.0L656.6 506.0H657.4L658.5 513.0Z" fill="url(#h1)"/><path d="M657.5 513.0L657.8 506.5H658.8L659.0 513.0Z" fill="url(#h1)"/><path d="M659.0 513.0L660.0 504.1H661.0L662.0 513.0Z" fill="url(#h0)"/><path d="M661.0 513.0L662.1 506.1H662.9L664.0 513.0Z" fill="url(#h0)"/><path d="M663.5 513.0L663.9 505.4H664.6L665.0 513.0Z" fill="url(#h1)"/><path d="M664.5 513.0L665.1 506.4H665.9L666.5 513.0Z" fill="url(#h1)"/><path d="M665.5 513.0L667.4 504.2H668.1L670.0 513.0Z" fill="url(#h0)"/><path d="M669.0 513.0L669.8 503.1H670.8L671.5 513.0Z" fill="url(#h1)"/><path d="M671.5 513.0L672.5 505.6H673.5L674.5 513.0Z" fill="url(#h0)"/><path d="M675.0 513.0L676.0 503.2H677.0L678.0 513.0Z" fill="url(#h1)"/><path d="M678.5 513.0L678.8 504.0H679.8L680.0 513.0Z" fill="url(#h0)"/><path d="M680.0 513.0L681.8 463.2H682.8L684.5 513.0Z" fill="url(#h1)"/><path d="M684.5 513.0L686.5 464.6H687.0L689.0 513.0Z" fill="url(#h0)"/><path d="M689.0 513.0L690.1 477.2H690.9L692.0 513.0Z" fill="url(#h1)"/><path d="M547.0 589.0L548.7 539.0H549.3L551.0 589.0Z" fill="url(#h1)"/><path d="M550.5 589.0L551.9 522.1H552.6L554.0 589.0Z" fill="url(#h1)"/><path d="M554.0 589.0L555.2 530.2H555.8L557.0 589.0Z" fill="url(#h0)"/><path d="M557.5 589.0L558.1 520.6H558.9L559.5 589.0Z" fill="url(#h1)"/><path d="M558.5 589.0L560.0 513.5H561.0L562.5 589.0Z" fill="url(#h1)"/><path d="M561.5 589.0L562.5 508.7H563.5L564.5 589.0Z" fill="url(#h1)"/><path d="M564.0 589.0L565.7 529.0H566.3L568.0 589.0Z" fill="url(#h1)"/><path d="M567.5 589.0L568.7 513.9H569.3L570.5 589.0Z" fill="url(#h1)"/><path d="M570.5 589.0L571.5 515.1H572.5L573.5 589.0Z" fill="url(#h1)"/><path d="M573.0 589.0L574.6 512.4H575.4L577.0 589.0Z" fill="url(#h0)"/><path d="M577.5 589.0L578.2 524.0H578.8L579.5 589.0Z" fill="url(#h1)"/><path d="M579.5 589.0L580.7 512.3H581.3L582.5 589.0Z" fill="url(#h1)"/><path d="M582.5 589.0L584.2 517.9H585.2L587.0 589.0Z" fill="url(#h1)"/><path d="M587.0 589.0L588.0 528.5H589.0L590.0 589.0Z" fill="url(#h1)"/><path d="M590.5 589.0L592.0 519.3H593.0L594.5 589.0Z" fill="url(#h0)"/><path d="M594.5 589.0L596.0 525.6H597.0L598.5 589.0Z" fill="url(#h0)"/><path d="M598.5 589.0L599.2 525.9H600.2L601.0 589.0Z" fill="url(#h1)"/><path d="M600.5 589.0L601.1 513.9H601.9L602.5 589.0Z" fill="url(#h1)"/><path d="M603.0 589.0L604.1 509.7H604.9L606.0 589.0Z" fill="url(#h0)"/><path d="M605.0 589.0L605.4 537.9H606.1L606.5 589.0Z" fill="url(#h1)"/><path d="M606.5 589.0L607.5 522.7H608.5L609.5 589.0Z" fill="url(#h1)"/><path d="M610.0 589.0L611.7 527.3H612.3L614.0 589.0Z" fill="url(#h1)"/><path d="M614.5 589.0L615.8 525.4H616.8L618.0 589.0Z" fill="url(#h0)"/><path d="M617.0 589.0L618.0 536.3H619.0L620.0 589.0Z" fill="url(#h1)"/><path d="M620.0 589.0L620.9 512.1H621.6L622.5 589.0Z" fill="url(#h1)"/><path d="M622.5 589.0L624.4 515.6H625.1L627.0 589.0Z" fill="url(#h1)"/><path d="M627.5 589.0L628.1 534.1H628.9L629.5 589.0Z" fill="url(#h1)"/><path d="M628.5 589.0L629.5 523.5H630.5L631.5 589.0Z" fill="url(#h0)"/><path d="M631.5 589.0L632.9 514.0H633.6L635.0 589.0Z" fill="url(#h1)"/><path d="M634.5 589.0L635.5 514.1H636.5L637.5 589.0Z" fill="url(#h0)"/><path d="M637.0 589.0L638.5 533.7H639.5L641.0 589.0Z" fill="url(#h1)"/><path d="M641.5 589.0L642.0 528.5H643.0L643.5 589.0Z" fill="url(#h1)"/><path d="M642.5 589.0L644.1 539.1H644.9L646.5 589.0Z" fill="url(#h0)"/><path d="M647.0 589.0L647.5 511.0H648.0L648.5 589.0Z" fill="url(#h1)"/><path d="M649.0 589.0L649.5 518.7H650.0L650.5 589.0Z" fill="url(#h0)"/><path d="M650.5 589.0L651.5 512.4H652.5L653.5 589.0Z" fill="url(#h1)"/><path d="M653.0 589.0L653.2 526.7H653.8L654.0 589.0Z" fill="url(#h0)"/><path d="M653.5 589.0L653.6 538.5H654.2L654.3 589.0Z" fill="url(#h0)"/><path d="M713.0 474.0L714.9 463.1H715.6L717.5 474.0Z" fill="url(#h1)"/><path d="M716.5 474.0L716.9 463.7H717.6L718.0 474.0Z" fill="url(#h1)"/><path d="M717.5 474.0L718.7 465.2H719.3L720.5 474.0Z" fill="url(#h0)"/><path d="M720.5 474.0L721.2 462.9H721.8L722.5 474.0Z" fill="url(#h1)"/><path d="M722.5 474.0L723.7 464.8H724.3L725.5 474.0Z" fill="url(#h1)"/><path d="M724.5 474.0L725.7 462.8H726.3L727.5 474.0Z" fill="url(#h1)"/><path d="M727.5 474.0L728.0 464.0H728.5L729.0 474.0Z" fill="url(#h0)"/><path d="M728.0 474.0L728.9 462.6H729.6L730.5 474.0Z" fill="url(#h0)"/><path d="M729.5 474.0L731.4 465.4H732.1L734.0 474.0Z" fill="url(#h1)"/><path d="M734.0 474.0L734.5 465.7H735.5L736.0 474.0Z" fill="url(#h1)"/><path d="M736.5 474.0L737.5 464.9H738.5L739.5 474.0Z" fill="url(#h1)"/><path d="M739.5 474.0L740.0 463.2H740.5L741.0 474.0Z" fill="url(#h0)"/><path d="M740.5 474.0L741.5 465.2H742.0L743.0 474.0Z" fill="url(#h0)"/><path d="M743.0 474.0L744.6 464.3H745.4L747.0 474.0Z" fill="url(#h0)"/><path d="M747.5 474.0L749.2 465.3H749.8L751.5 474.0Z" fill="url(#h1)"/><path d="M750.5 474.0L751.8 463.1H752.8L754.0 474.0Z" fill="url(#h1)"/><path d="M753.5 474.0L753.5 465.9H754.3L754.3 474.0Z" fill="url(#h1)"/><path d="M753.8 474.0L753.9 466.6H754.5L754.6 474.0Z" fill="url(#h1)"/><path d="M811.0 489.0L812.0 466.9H812.5L813.5 489.0Z" fill="url(#h0)"/><path d="M813.0 489.0L814.0 463.3H815.0L816.0 489.0Z" fill="url(#h0)"/><path d="M816.0 489.0L818.0 459.8H818.5L820.5 489.0Z" fill="url(#h0)"/><path d="M820.5 489.0L821.9 467.2H822.6L824.0 489.0Z" fill="url(#h1)"/><path d="M824.5 489.0L825.5 466.2H826.5L827.5 489.0Z" fill="url(#h1)"/><path d="M827.0 489.0L828.2 459.5H828.8L830.0 489.0Z" fill="url(#h1)"/><path d="M830.0 489.0L831.8 462.7H832.8L834.5 489.0Z" fill="url(#h1)"/><path d="M834.0 489.0L835.7 462.5H836.3L838.0 489.0Z" fill="url(#h0)"/><path d="M837.0 489.0L837.5 463.3H838.5L839.0 489.0Z" fill="url(#h1)"/><path d="M839.0 489.0L839.5 461.9H840.0L840.5 489.0Z" fill="url(#h1)"/><path d="M840.5 489.0L840.8 465.1H841.8L842.0 489.0Z" fill="url(#h0)"/><path d="M841.5 489.0L842.7 465.9H843.3L844.5 489.0Z" fill="url(#h1)"/><path d="M843.5 489.0L845.0 460.1H845.5L847.0 489.0Z" fill="url(#h1)"/><path d="M846.0 489.0L847.2 468.7H847.8L849.0 489.0Z" fill="url(#h1)"/><path d="M849.0 489.0L850.0 465.5H851.0L852.0 489.0Z" fill="url(#h1)"/><path d="M851.5 489.0L852.5 467.7H853.5L854.5 489.0Z" fill="url(#h1)"/><path d="M854.5 489.0L855.2 469.5H856.2L857.0 489.0Z" fill="url(#h1)"/><path d="M769.0 494.5L770.1 486.7H770.9L772.0 494.5Z" fill="url(#h1)"/><path d="M771.0 494.5L771.8 488.8H772.8L773.5 494.5Z" fill="url(#h1)"/><path d="M773.0 494.5L773.5 488.5H774.0L774.5 494.5Z" fill="url(#h1)"/><path d="M774.5 494.5L775.6 487.4H776.4L777.5 494.5Z" fill="url(#h0)"/><path d="M776.5 494.5L777.5 487.8H778.5L779.5 494.5Z" fill="url(#h0)"/><path d="M779.0 494.5L780.9 487.6H781.6L783.5 494.5Z" fill="url(#h1)"/><path d="M784.0 494.5L785.2 486.9H786.2L787.5 494.5Z" fill="url(#h0)"/><path d="M787.5 494.5L787.8 487.1H788.8L789.0 494.5Z" fill="url(#h1)"/><path d="M788.0 494.5L789.1 487.7H789.9L791.0 494.5Z" fill="url(#h0)"/><path d="M790.5 494.5L791.9 487.5H792.6L794.0 494.5Z" fill="url(#h0)"/><path d="M794.0 494.5L795.1 488.9H795.9L797.0 494.5Z" fill="url(#h0)"/><path d="M797.0 494.5L798.8 486.9H799.8L801.5 494.5Z" fill="url(#h1)"/><path d="M801.5 494.5L801.9 487.7H802.6L803.0 494.5Z" fill="url(#h0)"/><path d="M803.5 494.5L804.5 488.2H805.0L806.0 494.5Z" fill="url(#h0)"/><path d="M806.5 494.5L807.5 489.2H808.5L809.5 494.5Z" fill="url(#h0)"/><path d="M809.0 494.5L810.2 489.0H810.8L812.0 494.5Z" fill="url(#h0)"/><path d="M812.0 494.5L813.2 488.5H814.2L815.5 494.5Z" fill="url(#h0)"/><path d="M815.5 494.5L816.4 489.3H817.1L818.0 494.5Z" fill="url(#h1)"/><path d="M818.0 494.5L819.0 487.6H820.0L821.0 494.5Z" fill="url(#h0)"/><path d="M821.0 494.5L821.8 486.9H822.8L823.5 494.5Z" fill="url(#h1)"/><path d="M823.5 494.5L824.2 487.0H825.2L826.0 494.5Z" fill="url(#h0)"/><path d="M826.5 494.5L827.5 488.7H828.5L829.5 494.5Z" fill="url(#h0)"/><path d="M829.5 494.5L830.2 487.7H831.2L832.0 494.5Z" fill="url(#h0)"/><path d="M832.0 494.5L833.5 487.2H834.5L836.0 494.5Z" fill="url(#h0)"/><path d="M836.0 494.5L836.5 488.6H837.0L837.5 494.5Z" fill="url(#h0)"/><path d="M836.5 494.5L837.5 488.8H838.5L839.5 494.5Z" fill="url(#h0)"/><path d="M839.5 494.5L841.4 486.8H842.1L844.0 494.5Z" fill="url(#h0)"/><path d="M844.0 494.5L846.0 488.0H846.5L848.5 494.5Z" fill="url(#h1)"/><path d="M849.0 494.5L849.6 489.6H850.4L851.0 494.5Z" fill="url(#h1)"/><path d="M850.0 494.5L851.4 486.8H852.1L853.5 494.5Z" fill="url(#h1)"/><path d="M852.5 494.5L854.5 486.8H855.0L857.0 494.5Z" fill="url(#h1)"/><path d="M857.5 494.5L858.8 489.7H859.8L861.0 494.5Z" fill="url(#h0)"/><path d="M861.0 494.5L862.2 487.7H862.8L864.0 494.5Z" fill="url(#h0)"/><path d="M863.0 494.5L863.4 487.4H864.1L864.5 494.5Z" fill="url(#h0)"/><path d="M864.5 494.5L865.2 486.8H866.2L867.0 494.5Z" fill="url(#h1)"/><path d="M866.5 494.5L867.0 487.3H868.0L868.5 494.5Z" fill="url(#h1)"/><path d="M869.0 494.5L870.4 488.6H871.1L872.5 494.5Z" fill="url(#h1)"/><path d="M872.5 494.5L873.6 488.6H874.4L875.5 494.5Z" fill="url(#h1)"/><path d="M875.5 494.5L876.5 489.5H877.5L878.5 494.5Z" fill="url(#h0)"/><path d="M878.5 494.5L878.9 486.9H879.6L880.0 494.5Z" fill="url(#h1)"/><path d="M880.0 494.5L880.8 486.7H881.8L882.5 494.5Z" fill="url(#h1)"/><path d="M881.5 494.5L882.5 487.6H883.0L884.0 494.5Z" fill="url(#h0)"/><path d="M884.0 494.5L885.6 489.4H886.4L888.0 494.5Z" fill="url(#h0)"/><path d="M888.0 494.5L889.2 489.0H889.8L891.0 494.5Z" fill="url(#h1)"/><path d="M890.0 494.5L891.5 489.3H892.5L894.0 494.5Z" fill="url(#h0)"/><path d="M893.0 494.5L894.6 487.0H895.4L897.0 494.5Z" fill="url(#h0)"/><path d="M896.0 494.5L896.1 487.0H896.9L897.0 494.5Z" fill="url(#h0)"/><path d="M769.0 516.0L769.2 509.9H770.2L770.5 516.0Z" fill="url(#h1)"/><path d="M770.5 516.0L771.6 509.8H772.4L773.5 516.0Z" fill="url(#h1)"/><path d="M774.0 516.0L775.8 509.9H776.8L778.5 516.0Z" fill="url(#h1)"/><path d="M778.0 516.0L779.7 508.3H780.3L782.0 516.0Z" fill="url(#h1)"/><path d="M781.0 516.0L782.2 509.4H783.2L784.5 516.0Z" fill="url(#h1)"/><path d="M785.0 516.0L786.5 508.3H787.5L789.0 516.0Z" fill="url(#h1)"/><path d="M788.5 516.0L789.5 508.6H790.5L791.5 516.0Z" fill="url(#h1)"/><path d="M790.5 516.0L791.6 510.5H792.4L793.5 516.0Z" fill="url(#h1)"/><path d="M792.5 516.0L793.2 509.2H794.2L795.0 516.0Z" fill="url(#h1)"/><path d="M795.5 516.0L797.0 510.1H798.0L799.5 516.0Z" fill="url(#h0)"/><path d="M799.5 516.0L801.2 510.4H801.8L803.5 516.0Z" fill="url(#h0)"/><path d="M803.0 516.0L803.5 510.5H804.5L805.0 516.0Z" fill="url(#h1)"/><path d="M804.0 516.0L805.0 509.6H806.0L807.0 516.0Z" fill="url(#h1)"/><path d="M807.0 516.0L808.0 509.5H809.0L810.0 516.0Z" fill="url(#h0)"/><path d="M810.5 516.0L811.0 509.0H812.0L812.5 516.0Z" fill="url(#h1)"/><path d="M811.5 516.0L813.2 509.2H813.8L815.5 516.0Z" fill="url(#h1)"/><path d="M816.0 516.0L816.5 509.3H817.5L818.0 516.0Z" fill="url(#h1)"/><path d="M817.0 516.0L817.0 508.7H818.0L818.0 516.0Z" fill="url(#h1)"/><path d="M817.5 516.0L817.6 509.5H818.2L818.3 516.0Z" fill="url(#h0)"/><path d="M818.0 531.0L818.4 511.0H819.1L819.5 531.0Z" fill="url(#h0)"/><path d="M818.5 531.0L818.9 508.0H819.6L820.0 531.0Z" fill="url(#h0)"/><path d="M820.0 531.0L820.7 507.9H821.3L822.0 531.0Z" fill="url(#h1)"/><path d="M822.5 531.0L823.6 509.4H824.4L825.5 531.0Z" fill="url(#h1)"/><path d="M825.0 531.0L826.2 507.5H827.2L828.5 531.0Z" fill="url(#h1)"/><path d="M827.5 531.0L828.5 513.8H829.5L830.5 531.0Z" fill="url(#h1)"/><path d="M831.0 531.0L832.2 507.8H833.2L834.5 531.0Z" fill="url(#h0)"/><path d="M834.5 531.0L835.0 511.4H836.0L836.5 531.0Z" fill="url(#h1)"/><path d="M835.5 531.0L836.0 505.7H836.5L837.0 531.0Z" fill="url(#h1)"/><path d="M837.0 531.0L838.5 513.1H839.0L840.5 531.0Z" fill="url(#h1)"/><path d="M841.0 531.0L841.6 513.9H842.4L843.0 531.0Z" fill="url(#h0)"/><path d="M842.0 531.0L842.2 507.0H842.8L843.0 531.0Z" fill="url(#h0)"/><path d="M767.0 600.0L768.1 498.1H768.9L770.0 600.0Z" fill="url(#h1)"/><path d="M769.5 597.5L770.6 509.0H771.4L772.5 597.5Z" fill="url(#h1)"/><path d="M772.5 594.5L772.9 526.5H773.6L774.0 594.5Z" fill="url(#h0)"/><path d="M774.5 592.5L776.5 490.6H777.0L779.0 592.5Z" fill="url(#h0)"/><path d="M778.5 588.5L780.0 487.8H781.0L782.5 588.5Z" fill="url(#h0)"/><path d="M782.5 584.5L784.0 508.3H785.0L786.5 584.5Z" fill="url(#h1)"/><path d="M785.5 581.5L786.9 501.3H787.6L789.0 581.5Z" fill="url(#h0)"/><path d="M788.5 578.5L788.8 503.0H789.8L790.0 578.5Z" fill="url(#h1)"/><path d="M790.0 577.0L791.4 486.9H792.1L793.5 577.0Z" fill="url(#h1)"/><path d="M793.5 573.5L793.9 493.1H794.6L795.0 573.5Z" fill="url(#h1)"/><path d="M794.5 572.5L795.0 495.6H795.5L796.0 572.5Z" fill="url(#h1)"/><path d="M795.5 571.5L796.5 493.6H797.0L798.0 571.5Z" fill="url(#h1)"/><path d="M798.5 568.5L799.5 487.2H800.5L801.5 568.5Z" fill="url(#h1)"/><path d="M802.0 565.0L802.8 458.3H803.8L804.5 565.0Z" fill="url(#h0)"/><path d="M803.5 563.5L804.5 465.5H805.5L806.5 563.5Z" fill="url(#h1)"/><path d="M805.5 561.5L806.0 462.8H806.5L807.0 561.5Z" fill="url(#h0)"/><path d="M806.0 561.0L806.0 455.5H807.0L807.0 561.0Z" fill="url(#h1)"/><path d="M857.0 562.0L858.0 481.0H859.0L860.0 562.0Z" fill="url(#h1)"/><path d="M860.0 564.9L861.2 495.5H862.2L863.5 564.9Z" fill="url(#h1)"/><path d="M863.5 568.3L865.5 481.2H866.0L868.0 568.3Z" fill="url(#h0)"/><path d="M868.0 572.7L868.8 500.3H869.8L870.5 572.7Z" fill="url(#h0)"/><path d="M870.5 575.2L872.1 490.3H872.9L874.5 575.2Z" fill="url(#h1)"/><path d="M874.0 578.6L874.6 505.8H875.4L876.0 578.6Z" fill="url(#h1)"/><path d="M876.0 580.5L877.2 510.6H878.2L879.5 580.5Z" fill="url(#h0)"/><path d="M878.5 583.0L879.4 503.8H880.1L881.0 583.0Z" fill="url(#h1)"/><path d="M881.0 585.4L882.6 489.6H883.4L885.0 585.4Z" fill="url(#h0)"/><path d="M885.0 589.3L885.8 511.3H886.8L887.5 589.3Z" fill="url(#h1)"/><path d="M886.5 590.8L887.2 498.7H888.2L889.0 590.8Z" fill="url(#h0)"/><path d="M888.0 592.2L889.2 523.3H889.8L891.0 592.2Z" fill="url(#h1)"/><path d="M891.5 595.6L892.7 494.1H893.3L894.5 595.6Z" fill="url(#h1)"/><path d="M894.0 598.1L895.0 501.7H896.0L897.0 598.1Z" fill="url(#h0)"/><path d="M896.0 600.0L896.1 530.1H896.9L897.0 600.0Z" fill="url(#h1)"/><path d="M896.5 600.5L896.5 526.0H897.3L897.3 600.5Z" fill="url(#h1)"/><path d="M896.3 600.3L896.3 496.4H897.1L897.1 600.3Z" fill="url(#h0)"/><path d="M918.0 474.0L918.2 463.9H919.2L919.5 474.0Z" fill="url(#h1)"/><path d="M919.5 474.0L920.5 466.5H921.0L922.0 474.0Z" fill="url(#h1)"/><path d="M921.0 474.0L922.4 463.3H923.1L924.5 474.0Z" fill="url(#h1)"/><path d="M924.5 474.0L926.4 462.9H927.1L929.0 474.0Z" fill="url(#h0)"/><path d="M929.5 474.0L930.8 466.5H931.8L933.0 474.0Z" fill="url(#h1)"/><path d="M933.0 474.0L934.0 466.4H934.5L935.5 474.0Z" fill="url(#h0)"/><path d="M935.0 474.0L935.6 465.2H936.4L937.0 474.0Z" fill="url(#h1)"/><path d="M937.0 474.0L937.8 463.8H938.8L939.5 474.0Z" fill="url(#h1)"/><path d="M939.5 474.0L940.5 463.5H941.5L942.5 474.0Z" fill="url(#h1)"/><path d="M942.5 474.0L942.8 463.3H943.8L944.0 474.0Z" fill="url(#h1)"/><path d="M944.5 474.0L946.2 464.3H947.2L949.0 474.0Z" fill="url(#h1)"/><path d="M949.5 474.0L950.5 466.2H951.5L952.5 474.0Z" fill="url(#h0)"/><path d="M952.5 474.0L953.2 463.9H953.8L954.5 474.0Z" fill="url(#h1)"/><path d="M954.0 474.0L955.7 463.4H956.3L958.0 474.0Z" fill="url(#h0)"/><path d="M958.5 474.0L959.2 466.2H960.2L961.0 474.0Z" fill="url(#h1)"/><path d="M960.5 474.0L961.4 465.6H962.1L963.0 474.0Z" fill="url(#h1)"/><path d="M962.5 474.0L962.8 462.9H963.8L964.0 474.0Z" fill="url(#h0)"/><path d="M963.0 474.0L963.1 463.3H963.9L964.0 474.0Z" fill="url(#h0)"/><g fill="#ffffff"><path d="M302 452 H365 V474 H302 Z"/><path d="M322 474 H357 V594 Q357 603 348 603 H322 Z"/><path d="M302 508 H322 V524 L302 527 Z"/><path d="M302 590 H322 V603 H302 Z"/><path d="M357 500 H364 V516 H357 Z"/><path d="M398 451 H487 L481 478 H441 V466 H398 Z"/><path d="M368.5 478 H487.5 V594 Q487.5 603 478 603 H447.5 V494 H441.4 L432.3 603 H403 L413 494 H403 L394 603 H371.5 V494 H368.5 Z"/><path d="M508.5 451 H692 L684 500 Q682 507.5 675 507.5 H508.5 V489.5 H641 V466 H508.5 Z"/><path d="M508.5 466 H555.4 V474 H508.5 Z"/><path d="M531 482 H556 V490 H531 Z"/><path d="M508.5 513 H692 V593 Q692 603 682 603 H508.5 Z M547 528 V589 H654 V528 Z" fill-rule="evenodd"/><path d="M713 451 H754 V466 H713 Z"/><path d="M713 474 H754 V603 H728 Q720 603 720 595 V489 H713 Z"/><path d="M769 451 H897 V489 H863 Q857 489 857 483 V466 H811 V489 H769 Z"/><path d="M769 494.5 H897 V511 H769 Z"/><path d="M770.4 515.9 H818.4 L830.6 531.2 L842.9 510.8 H896.9 V515.9 L857.1 558.8 L896.9 597.6 V601.6 H857.1 L835.7 584.3 L818.4 601.6 H767.3 V597.6 L807.1 556.7 L770.4 518 Z"/><path d="M918.4 451 H964.3 V466 H918.4 Z"/><path d="M918.4 474 H964.3 V587 H972 V603 H934 Q925.5 603 925.5 595 V489 H918.4 Z"/><path d="M972.4 474 H1014 V451 H1060 V474 H1103 V489.4 H1060 V603 H1014 V489.4 H972.4 Z"/></g></svg>
<div class="menu" style="left:149px;top:23px;width:249px;height:447px;box-shadow:1px 1px 1px rgba(0,0,0,.25)"></div>
<div class="hl" style="left:152px;top:26px;width:241px;height:21px"></div>
<div class="it" style="left:171px;top:26px;color:#ffffff">模式(M)</div>
<svg style="left:383px;top:33px" width="6" height="8"><path d="M0.5 0 L5 4 L0.5 8 Z" fill="#ffffff"/></svg>
<div class="sep" style="left:153px;top:50px;width:241px"></div>
<div class="it" style="left:171px;top:56px;color:#151515">调整(J)</div>
<svg style="left:383px;top:63px" width="6" height="8"><path d="M0.5 0 L5 4 L0.5 8 Z" fill="#111"/></svg>
<div class="sep" style="left:153px;top:80px;width:241px"></div>
<div class="it" style="left:171px;top:86px;color:#151515">自动色调(N)</div>
<div class="sc" style="left:250px;top:86px;width:130px;color:#151515">Shift+Ctrl+L</div>
<div class="it" style="left:171px;top:107px;color:#151515">自动对比度(U)</div>
<div class="sc" style="left:250px;top:107px;width:130px;color:#151515">Alt+Shift+Ctrl+L</div>
<div class="it" style="left:171px;top:128px;color:#8e8e8e">自动颜色(O)</div>
<div class="sc" style="left:250px;top:128px;width:130px;color:#8e8e8e">Shift+Ctrl+B</div>
<div class="sep" style="left:153px;top:152px;width:241px"></div>
<div class="it" style="left:171px;top:158px;color:#151515">图像大小(I)...</div>
<div class="sc" style="left:250px;top:158px;width:130px;color:#151515">Alt+Ctrl+I</div>
<div class="it" style="left:171px;top:179px;color:#151515">画布大小(S)...</div>
<div class="sc" style="left:250px;top:179px;width:130px;color:#151515">Alt+Ctrl+C</div>
<div class="it" style="left:171px;top:200px;color:#151515">图像旋转(G)</div>
<svg style="left:383px;top:207px" width="6" height="8"><path d="M0.5 0 L5 4 L0.5 8 Z" fill="#111"/></svg>
<div class="it" style="left:171px;top:221px;color:#8e8e8e">裁剪(P)</div>
<div class="it" style="left:171px;top:242px;color:#151515">裁切(R)...</div>
<div class="it" style="left:171px;top:263px;color:#8e8e8e">显示全部(V)</div>
<div class="sep" style="left:153px;top:287px;width:241px"></div>
<div class="it" style="left:171px;top:293px;color:#151515">复制(D)...</div>
<div class="it" style="left:171px;top:314px;color:#8e8e8e">应用图像(Y)...</div>
<div class="it" style="left:171px;top:335px;color:#8e8e8e">计算(C)...</div>
<div class="sep" style="left:153px;top:359px;width:241px"></div>
<div class="it" style="left:171px;top:365px;color:#8e8e8e">变量(B)</div>
<svg style="left:383px;top:372px" width="6" height="8"><path d="M0.5 0 L5 4 L0.5 8 Z" fill="#8e8e8e"/></svg>
<div class="it" style="left:171px;top:386px;color:#8e8e8e">应用数据组(L)...</div>
<div class="sep" style="left:153px;top:410px;width:241px"></div>
<div class="it" style="left:171px;top:416px;color:#8e8e8e">陷印(T)...</div>
<div class="sep" style="left:153px;top:440px;width:241px"></div>
<div class="it" style="left:171px;top:446px;color:#151515">分析(A)</div>
<svg style="left:383px;top:453px" width="6" height="8"><path d="M0.5 0 L5 4 L0.5 8 Z" fill="#111"/></svg>
<div class="menu" style="left:392px;top:23px;width:142px;height:276px;box-shadow:1px 1px 1px rgba(0,0,0,.25)"></div>
<div class="it" style="left:414px;top:26px;color:#8e8e8e">位图(B)</div>
<div class="it" style="left:414px;top:47px;color:#151515">灰度(G)</div>
<div class="it" style="left:414px;top:68px;color:#8e8e8e">双色调(D)</div>
<div class="it" style="left:414px;top:89px;color:#151515">索引颜色(I)</div>
<svg style="left:398px;top:94px" width="12" height="11"><path d="M1.5 5.5 L4.5 8.8 L10.5 1.5" stroke="#111" stroke-width="2" fill="none"/></svg>
<div class="hl" style="left:395px;top:110px;width:136px;height:21px"></div>
<div class="it" style="left:414px;top:110px;color:#ffffff">RGB 颜色(R)</div>
<div class="it" style="left:414px;top:131px;color:#151515">CMYK 颜色(C)</div>
<div class="it" style="left:414px;top:152px;color:#151515">Lab 颜色(L)</div>
<div class="it" style="left:414px;top:173px;color:#8e8e8e">多通道(M)</div>
<div class="sep" style="left:396px;top:197px;width:135px"></div>
<div class="it" style="left:414px;top:203px;color:#151515">8 位/通道(A)</div>
<svg style="left:398px;top:208px" width="12" height="11"><path d="M1.5 5.5 L4.5 8.8 L10.5 1.5" stroke="#111" stroke-width="2" fill="none"/></svg>
<div class="it" style="left:414px;top:224px;color:#8e8e8e">16 位/通道(N)</div>
<div class="it" style="left:414px;top:245px;color:#8e8e8e">32 位/通道(H)</div>
<div class="sep" style="left:396px;top:269px;width:135px"></div>
<div class="it" style="left:414px;top:275px;color:#151515">颜色表(T)...</div>
<svg style="left:0;top:0" width="1227" height="956" viewBox="0 0 1227 956">
<path d="M523.5 133.3 L831.7 403.9 L832.3 403.1 L528.5 127.7 Z" fill="#f23a3a"/>
<path d="M517 122.5 L533.5 127 L523 138 Z" fill="#f23a3a"/>
</svg>
<div style="left:880px;top:901px;height:46px;line-height:46px;font-size:36px;font-weight:500;color:#e8e8e8;white-space:nowrap;text-shadow:1px 1px 1px rgba(0,0,0,.55),0 0 2px rgba(0,0,0,.4)">头条号</div>
<svg style="left:990px;top:900px" width="25" height="46"><path d="M7.5 39 L18.5 7" stroke="rgba(0,0,0,.45)" stroke-width="3.2" transform="translate(1,1)"/><path d="M7.5 39 L18.5 7" stroke="#e8e8e8" stroke-width="2.8"/></svg>
<div style="left:1024px;top:901px;height:46px;line-height:46px;font-size:36px;font-weight:500;color:#e8e8e8;white-space:nowrap;text-shadow:1px 1px 1px rgba(0,0,0,.55),0 0 2px rgba(0,0,0,.4)">扬名爱设计</div>
</body></html>
